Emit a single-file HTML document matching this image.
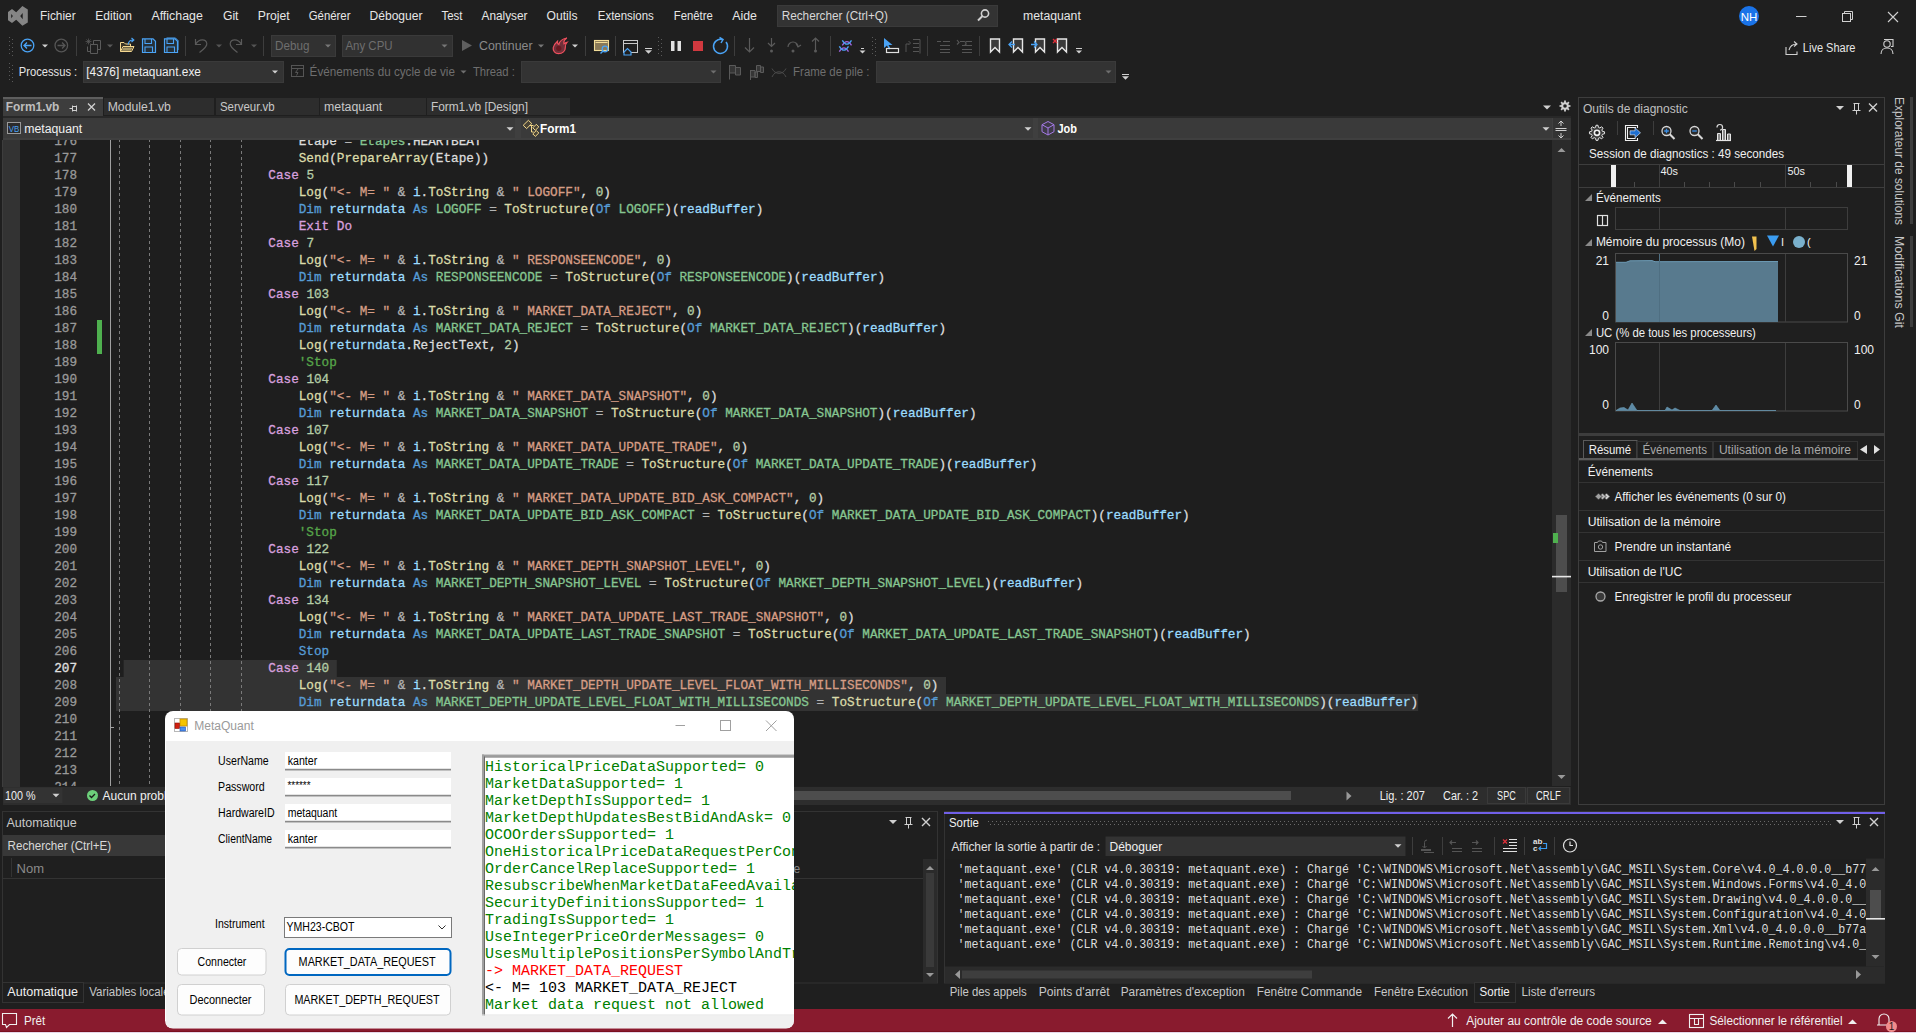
<!DOCTYPE html><html><head><meta charset="utf-8"><style>html,body{margin:0;padding:0;width:1916px;height:1033px;overflow:hidden;background:#1f1f1f}svg{display:block;font-family:"Liberation Sans",sans-serif}text{white-space:pre}</style></head><body><svg width="1916" height="1033" viewBox="0 0 1916 1033"><rect x="0" y="0" width="1916" height="1033" fill="#1f1f1f" />
<path d="M8,12 L12,9 L16.2,12.2 L22.4,6 L27.8,9.6 L27.8,22.4 L22.4,25.8 L16.2,19.8 L12,23 L8,20.2 Z M11.2,13.9 L12.9,16.1 L11.2,18.2 Z M22.7,13 L20.2,16.1 L22.7,19.2 Z" fill="#858585" fill-rule="evenodd"/>
<text x="40.1" y="20" font-size="12" fill="#e6e6e6" textLength="35.5" lengthAdjust="spacingAndGlyphs" >Fichier</text>
<text x="95.3" y="20" font-size="12" fill="#e6e6e6" textLength="36.7" lengthAdjust="spacingAndGlyphs" >Edition</text>
<text x="151.4" y="20" font-size="12" fill="#e6e6e6" textLength="51.4" lengthAdjust="spacingAndGlyphs" >Affichage</text>
<text x="222.9" y="20" font-size="12" fill="#e6e6e6" textLength="15.6" lengthAdjust="spacingAndGlyphs" >Git</text>
<text x="257.8" y="20" font-size="12" fill="#e6e6e6" textLength="31.9" lengthAdjust="spacingAndGlyphs" >Projet</text>
<text x="308.7" y="20" font-size="12" fill="#e6e6e6" textLength="41.8" lengthAdjust="spacingAndGlyphs" >Générer</text>
<text x="369.5" y="20" font-size="12" fill="#e6e6e6" textLength="53" lengthAdjust="spacingAndGlyphs" >Déboguer</text>
<text x="441.5" y="20" font-size="12" fill="#e6e6e6" textLength="21" lengthAdjust="spacingAndGlyphs" >Test</text>
<text x="481.5" y="20" font-size="12" fill="#e6e6e6" textLength="46" lengthAdjust="spacingAndGlyphs" >Analyser</text>
<text x="546.5" y="20" font-size="12" fill="#e6e6e6" textLength="31" lengthAdjust="spacingAndGlyphs" >Outils</text>
<text x="597.8" y="20" font-size="12" fill="#e6e6e6" textLength="56" lengthAdjust="spacingAndGlyphs" >Extensions</text>
<text x="673.8" y="20" font-size="12" fill="#e6e6e6" textLength="39" lengthAdjust="spacingAndGlyphs" >Fenêtre</text>
<text x="732.2" y="20" font-size="12" fill="#e6e6e6" textLength="24.7" lengthAdjust="spacingAndGlyphs" >Aide</text>
<rect x="777.5" y="5.5" width="220" height="21" fill="#333333" stroke="#3a3a3a" stroke-width="1" />
<text x="781.7" y="20" font-size="12" fill="#d8d8d8" textLength="106.2" lengthAdjust="spacingAndGlyphs" >Rechercher (Ctrl+Q)</text>
<circle cx="985" cy="13.5" r="3.6" fill="none" stroke="#d0d0d0" stroke-width="1.6" />
<line x1="982.5" y1="16" x2="978" y2="20.5" stroke="#d0d0d0" stroke-width="2" />
<text x="1023" y="20" font-size="12" fill="#e6e6e6" textLength="57.8" lengthAdjust="spacingAndGlyphs" >metaquant</text>
<circle cx="1749" cy="16" r="10" fill="#1a73e8" />
<text x="1749" y="20.5" font-size="11.5" fill="#ffffff" text-anchor="middle" >NH</text>
<line x1="1796" y1="16.5" x2="1806.5" y2="16.5" stroke="#d0d0d0" stroke-width="1" />
<rect x="1842.5" y="13.5" width="8" height="8" fill="none" stroke="#d0d0d0" stroke-width="1" />
<path d="M1844.5,13.5 V11.5 H1852.5 V19.5 H1850.5" fill="none" stroke="#d0d0d0" stroke-width="1" />
<path d="M1888,12 L1898,22 M1898,12 L1888,22" fill="none" stroke="#d0d0d0" stroke-width="1.1" />
<rect x="9" y="37" width="1" height="1" fill="#5a5a5a" />
<rect x="12" y="39" width="1" height="1" fill="#5a5a5a" />
<rect x="9" y="41" width="1" height="1" fill="#5a5a5a" />
<rect x="12" y="43" width="1" height="1" fill="#5a5a5a" />
<rect x="9" y="45" width="1" height="1" fill="#5a5a5a" />
<rect x="12" y="47" width="1" height="1" fill="#5a5a5a" />
<rect x="9" y="49" width="1" height="1" fill="#5a5a5a" />
<rect x="12" y="51" width="1" height="1" fill="#5a5a5a" />
<rect x="9" y="53" width="1" height="1" fill="#5a5a5a" />
<rect x="12" y="55" width="1" height="1" fill="#5a5a5a" />
<circle cx="27.5" cy="45.5" r="6.3" fill="none" stroke="#4aa3f5" stroke-width="1.3" />
<path d="M24,45.5 H31.5 M27,42.5 L24,45.5 L27,48.5" fill="none" stroke="#4aa3f5" stroke-width="1.3" />
<path d="M42.0,44.5 L48.0,44.5 L45,47.5 Z" fill="#d0d0d0" />
<circle cx="61.3" cy="45.5" r="6.3" fill="none" stroke="#555555" stroke-width="1.3" />
<path d="M57.5,45.5 H65 M62,42.5 L65,45.5 L62,48.5" fill="none" stroke="#555555" stroke-width="1.3" />
<line x1="76.5" y1="36" x2="76.5" y2="56" stroke="#3d3d3d" stroke-width="1" />
<path d="M93.5,44.5 V40.5 H100.5 V49.5 H97.5 M90.5,53.5 V44.5 H97.5 V53.5 Z M87.5,46.5 V51.5 H90.5" fill="none" stroke="#5a5a5a" stroke-width="1" />
<path d="M88.5,38.5 v6 M85.5,41.5 h6 M86.4,39.4 l4.2,4.2 M90.6,39.4 l-4.2,4.2" fill="none" stroke="#5a5a5a" stroke-width="0.7" />
<path d="M107.0,44.5 L113.0,44.5 L110,47.5 Z" fill="#5a5a5a" />
<path d="M120.5,51.5 V42.5 H124 L125.5,44 H130.5 V46 M120.5,51.5 L123,46.5 H134 L131.5,51.5 Z" fill="#3a3426" stroke="#f5d890" stroke-width="1" />
<path d="M121.5,50.8 L123.5,47.5 H132.8 L130.8,50.8 Z" fill="#a89868" />
<path d="M128.2,44.5 C128.5,41.5 130.5,40 133,40 M131.5,38 L133.8,40 L131.5,42" fill="none" stroke="#4aa3f5" stroke-width="1.2" />
<path d="M142.5,38.8 H153 L155.5,41.3 V52.5 H142.5 Z" fill="#263038" stroke="#4aa3f5" stroke-width="1.2" />
<path d="M145,39 V43.5 H151.5 V39 M145,52.5 V47 H152.5 V52.5" fill="none" stroke="#4aa3f5" stroke-width="1.1" />
<path d="M164.5,38.8 H175 L177.5,41.3 V52.5 H164.5 Z" fill="#263038" stroke="#4aa3f5" stroke-width="1.2" />
<path d="M167,39 V43.5 H173.5 V39 M167,52.5 V47 H174.5 V52.5" fill="none" stroke="#4aa3f5" stroke-width="1.1" />
<path d="M166.5,38 H175.5 L178,40.5 V50" fill="none" stroke="#4aa3f5" stroke-width="1" />
<line x1="185.5" y1="36" x2="185.5" y2="56" stroke="#3d3d3d" stroke-width="1" />
<path d="M195.5,39 V44.5 H201 M195.8,44 C199,38.5 206,38.5 206.8,43.5 C207.2,46 205.5,48 199.5,52.5" fill="none" stroke="#5a5a5a" stroke-width="1.2" />
<path d="M216.0,44.5 L222.0,44.5 L219,47.5 Z" fill="#555" />
<path d="M241.5,39 V44.5 H236 M241.2,44 C238,38.5 231,38.5 230.2,43.5 C229.8,46 231.5,48 237.5,52.5" fill="none" stroke="#5a5a5a" stroke-width="1.2" />
<path d="M251.0,44.5 L257.0,44.5 L254,47.5 Z" fill="#555" />
<line x1="263.5" y1="36" x2="263.5" y2="56" stroke="#3d3d3d" stroke-width="1" />
<rect x="271.5" y="35.5" width="64" height="21" fill="#313131" stroke="#3a3a3a" stroke-width="1" />
<text x="275.1" y="50" font-size="12" fill="#6e6e6e" textLength="34.4" lengthAdjust="spacingAndGlyphs" >Debug</text>
<path d="M325.0,44.5 L331.0,44.5 L328,47.5 Z" fill="#777" />
<rect x="342.5" y="35.5" width="110" height="21" fill="#313131" stroke="#3a3a3a" stroke-width="1" />
<text x="345.4" y="50" font-size="12" fill="#6e6e6e" textLength="47.2" lengthAdjust="spacingAndGlyphs" >Any CPU</text>
<path d="M441.5,44.5 L447.5,44.5 L444.5,47.5 Z" fill="#777" />
<path d="M462,40 L472,45.5 L462,51 Z" fill="#5f5f5f" />
<text x="479.0" y="50" font-size="12" fill="#8a8a8a" textLength="53.5" lengthAdjust="spacingAndGlyphs" >Continuer</text>
<path d="M538.0,44.5 L544.0,44.5 L541,47.5 Z" fill="#777" />
<path d="M558.5,53.6 C555,53.6 552.8,51 553.2,47.8 C553.6,44.8 556,42.5 557.5,41.2 C557.3,42.8 557.8,44 558.8,44.5 C559.5,41.5 562.5,38.8 566.8,38 C564.5,39.5 563.5,41.8 564,43.8 C565,43 566,42.5 567,42.3 C565.5,43.8 565.2,45.5 565.3,47.5 C565.5,51 562.5,53.6 558.5,53.6 Z" fill="#70303a" stroke="#f0505e" stroke-width="1.2" />
<circle cx="558.8" cy="48.3" r="2.6" fill="#6a1820" />
<path d="M572.0,44.5 L578.0,44.5 L575,47.5 Z" fill="#d0d0d0" />
<line x1="585.5" y1="36" x2="585.5" y2="56" stroke="#3d3d3d" stroke-width="1" />
<rect x="594.5" y="40.5" width="14" height="10" fill="#8a7a58" stroke="#f2dc98" stroke-width="1.1" />
<line x1="595.5" y1="42.5" x2="607.5" y2="42.5" stroke="#f2dc98" stroke-width="1" />
<circle cx="605" cy="49" r="2.8" fill="none" stroke="#4aa3f5" stroke-width="1.3" />
<line x1="603" y1="51" x2="600.5" y2="53.5" stroke="#4aa3f5" stroke-width="1.5" />
<line x1="615.5" y1="36" x2="615.5" y2="56" stroke="#3d3d3d" stroke-width="1" />
<rect x="623.5" y="40.5" width="14" height="12" fill="none" stroke="#c8c8c8" stroke-width="1" />
<line x1="623.5" y1="43.5" x2="637.5" y2="43.5" stroke="#c8c8c8" stroke-width="1" />
<path d="M624,52 l3.5,-3.5 l3.5,3.5 v3 h-7 Z" fill="#1f1f1f" stroke="#4aa3f5" stroke-width="1.2" />
<line x1="645" y1="48.5" x2="652" y2="48.5" stroke="#d0d0d0" stroke-width="1" />
<path d="M645.0,50.25 L652.0,50.25 L648.5,53.75 Z" fill="#d0d0d0" />
<rect x="658" y="37" width="1" height="1" fill="#5a5a5a" />
<rect x="661" y="39" width="1" height="1" fill="#5a5a5a" />
<rect x="658" y="41" width="1" height="1" fill="#5a5a5a" />
<rect x="661" y="43" width="1" height="1" fill="#5a5a5a" />
<rect x="658" y="45" width="1" height="1" fill="#5a5a5a" />
<rect x="661" y="47" width="1" height="1" fill="#5a5a5a" />
<rect x="658" y="49" width="1" height="1" fill="#5a5a5a" />
<rect x="661" y="51" width="1" height="1" fill="#5a5a5a" />
<rect x="658" y="53" width="1" height="1" fill="#5a5a5a" />
<rect x="661" y="55" width="1" height="1" fill="#5a5a5a" />
<rect x="671" y="41" width="3.5" height="10" fill="#e0e0e0" />
<rect x="677.5" y="41" width="3.5" height="10" fill="#e0e0e0" />
<rect x="693" y="41" width="10" height="10" fill="#d1393f" />
<path d="M726,42 a7,7 0 1 1 -4,-2.5" fill="none" stroke="#4aa3f5" stroke-width="1.5" />
<path d="M719.5,37.5 l3.5,2 l-2,3.5" fill="none" stroke="#4aa3f5" stroke-width="1.5" />
<line x1="734.5" y1="36" x2="734.5" y2="56" stroke="#3d3d3d" stroke-width="1" />
<path d="M749.5,38 v14 M745,47.5 l4.5,4.5 l4.5,-4.5" fill="none" stroke="#5a5a5a" stroke-width="1.2" />
<path d="M771.5,38 v8 M768,43 l3.5,3.5 l3.5,-3.5" fill="none" stroke="#5a5a5a" stroke-width="1.2" />
<circle cx="771.5" cy="51" r="1.5" fill="#5a5a5a" />
<path d="M788,47 a5,5 0 0 1 10,0 M796,43.5 l2,3.5 l3,-2" fill="none" stroke="#5a5a5a" stroke-width="1.2" />
<circle cx="793" cy="51" r="1.5" fill="#5a5a5a" />
<path d="M815.5,52 v-14 M812,41.5 l3.5,-3.5 l3.5,3.5" fill="none" stroke="#5a5a5a" stroke-width="1.2" />
<circle cx="815.5" cy="51" r="1.5" fill="#5a5a5a" />
<line x1="830.5" y1="36" x2="830.5" y2="56" stroke="#3d3d3d" stroke-width="1" />
<path d="M842.3,45.4 Q846.9,38 851.5,45.4 M839.3,51.6 Q843.9,44 848.5,51.6" fill="none" stroke="#a066e0" stroke-width="1.3" />
<path d="M842.3,40.3 Q846.9,48 851.5,40.3 M839.3,46.3 Q843.9,54 848.5,46.3" fill="none" stroke="#4aa3f5" stroke-width="1.3" />
<line x1="861" y1="48.5" x2="864" y2="48.5" stroke="#d0d0d0" stroke-width="1" />
<path d="M859.5,50.5 L865.5,50.5 L862.5,53.5 Z" fill="#d0d0d0" />
<rect x="872" y="37" width="1" height="1" fill="#5a5a5a" />
<rect x="875" y="39" width="1" height="1" fill="#5a5a5a" />
<rect x="872" y="41" width="1" height="1" fill="#5a5a5a" />
<rect x="875" y="43" width="1" height="1" fill="#5a5a5a" />
<rect x="872" y="45" width="1" height="1" fill="#5a5a5a" />
<rect x="875" y="47" width="1" height="1" fill="#5a5a5a" />
<rect x="872" y="49" width="1" height="1" fill="#5a5a5a" />
<rect x="875" y="51" width="1" height="1" fill="#5a5a5a" />
<rect x="872" y="53" width="1" height="1" fill="#5a5a5a" />
<rect x="875" y="55" width="1" height="1" fill="#5a5a5a" />
<path d="M884,38 v10 l3,-2.5 l2,4 l1.5,-1 l-2,-3.5 h4 Z" fill="#4aa3f5" />
<rect x="886.5" y="48.5" width="12" height="4" fill="none" stroke="#e0e0e0" stroke-width="1.2" />
<path d="M906,52 v-8 h3 M908.5,41 l2,2 l-2,2 M913,39.5 h7 v14 M913,43.5 h6 M913,47.5 h6 M913,51.5 h6" fill="none" stroke="#555" stroke-width="1" />
<line x1="927.5" y1="36" x2="927.5" y2="56" stroke="#3d3d3d" stroke-width="1" />
<path d="M937,41.5 h4 M943,41.5 h7 M940,45.5 h10 M940,49.5 h10 M940,52.5 h10" fill="none" stroke="#555" stroke-width="1.2" />
<path d="M957,40 l2,2.5 l-2,2 M960,41.5 h4 a2,2 0 0 1 0,4 M966,41.5 h6 M962,45.5 h10 M962,49.5 h10 M962,52.5 h10" fill="none" stroke="#555" stroke-width="1.2" />
<line x1="979.5" y1="36" x2="979.5" y2="56" stroke="#3d3d3d" stroke-width="1" />
<path d="M990.5,39 h9 v13 l-4.5,-4.5 l-4.5,4.5 Z" fill="#3a3a3a" stroke="#e6e6e6" stroke-width="1.4" />
<path d="M1013.5,39 h9 v13 l-4.5,-4.5 l-4.5,4.5 Z" fill="#3a3a3a" stroke="#e6e6e6" stroke-width="1.4" />
<path d="M1035.5,39 h9 v13 l-4.5,-4.5 l-4.5,4.5 Z" fill="#3a3a3a" stroke="#e6e6e6" stroke-width="1.4" />
<path d="M1057.5,39 h9 v13 l-4.5,-4.5 l-4.5,4.5 Z" fill="#3a3a3a" stroke="#e6e6e6" stroke-width="1.4" />
<path d="M1009,44.5 h6 M1012,41.5 l-3,3 l3,3" fill="none" stroke="#4aa3f5" stroke-width="1.3" />
<path d="M1031,44.5 h6 M1034,41.5 l3,3 l-3,3" fill="none" stroke="#4aa3f5" stroke-width="1.3" />
<path d="M1053,39 l4,4 M1057,39 l-4,4" fill="none" stroke="#e0303a" stroke-width="1.3" />
<line x1="1076" y1="48.5" x2="1082" y2="48.5" stroke="#d0d0d0" stroke-width="1" />
<path d="M1076.0,50.5 L1082.0,50.5 L1079,53.5 Z" fill="#d0d0d0" />
<path d="M1786,47 v7.5 h11 v-3 M1789,50 c1,-4 4,-6 8,-6 M1794,41.5 l3,2.5 l-3,2.5" fill="none" stroke="#d0d0d0" stroke-width="1.1" />
<text x="1802.8" y="52" font-size="12" fill="#e6e6e6" textLength="52.7" lengthAdjust="spacingAndGlyphs" >Live Share</text>
<circle cx="1887" cy="44" r="3.2" fill="none" stroke="#d0d0d0" stroke-width="1.1" />
<path d="M1881,54 c0,-4 3,-6 6,-6 c3,0 6,2 6,6 M1884,39.5 h9 v7 h-2" fill="none" stroke="#d0d0d0" stroke-width="1.1" />
<rect x="9" y="63" width="1" height="1" fill="#5a5a5a" />
<rect x="12" y="65" width="1" height="1" fill="#5a5a5a" />
<rect x="9" y="67" width="1" height="1" fill="#5a5a5a" />
<rect x="12" y="69" width="1" height="1" fill="#5a5a5a" />
<rect x="9" y="71" width="1" height="1" fill="#5a5a5a" />
<rect x="12" y="73" width="1" height="1" fill="#5a5a5a" />
<rect x="9" y="75" width="1" height="1" fill="#5a5a5a" />
<rect x="12" y="77" width="1" height="1" fill="#5a5a5a" />
<rect x="9" y="79" width="1" height="1" fill="#5a5a5a" />
<rect x="12" y="81" width="1" height="1" fill="#5a5a5a" />
<text x="18.8" y="76" font-size="12" fill="#e6e6e6" textLength="58.4" lengthAdjust="spacingAndGlyphs" >Processus :</text>
<rect x="83.5" y="61.5" width="200" height="21" fill="#333333" stroke="#3a3a3a" stroke-width="1" />
<text x="86.3" y="76" font-size="12" fill="#f0f0f0" textLength="114.6" lengthAdjust="spacingAndGlyphs" >[4376] metaquant.exe</text>
<path d="M272.0,70.5 L278.0,70.5 L275,73.5 Z" fill="#d0d0d0" />
<rect x="291.5" y="65.5" width="12" height="11" fill="none" stroke="#555" stroke-width="1" />
<line x1="291.5" y1="68.5" x2="303.5" y2="68.5" stroke="#555" stroke-width="1" />
<path d="M298,69 l-2.5,3.5 h2.5 l-1.5,3" fill="none" stroke="#555" stroke-width="1" />
<text x="309.6" y="76" font-size="12" fill="#6e6e6e" textLength="145.3" lengthAdjust="spacingAndGlyphs" >Événements du cycle de vie</text>
<path d="M460.5,70.5 L466.5,70.5 L463.5,73.5 Z" fill="#6e6e6e" />
<text x="472.9" y="76" font-size="12" fill="#6e6e6e" textLength="42" lengthAdjust="spacingAndGlyphs" >Thread :</text>
<rect x="521.5" y="61.5" width="199" height="21" fill="#333333" stroke="#3a3a3a" stroke-width="1" />
<path d="M710.5,70.5 L716.5,70.5 L713.5,73.5 Z" fill="#6e6e6e" />
<path d="M729.5,65.5 H735.5 V73 H729.5 Z M735.5,67.5 H740.5 V75 H735.5 Z" fill="#353535" stroke="#5a5a5a" stroke-width="1" />
<line x1="729.5" y1="65" x2="729.5" y2="79.5" stroke="#5a5a5a" stroke-width="1" />
<path d="M750.5,70.5 H755 V77 H750.5 Z M755,72 H757.5 V77.5 H755 Z M756.5,65.5 H760.5 V71.5 H756.5 Z M760.5,67 H763.5 V72.5 H760.5 Z" fill="#353535" stroke="#5a5a5a" stroke-width="1" />
<line x1="750.5" y1="70" x2="750.5" y2="80" stroke="#5a5a5a" stroke-width="1" />
<path d="M772,68.5 C775,75 783,75 786,68.5 M772,77 C775,70 783,70 786,77" fill="none" stroke="#4a4a4a" stroke-width="1" />
<text x="793.1" y="76" font-size="12" fill="#6e6e6e" textLength="76.4" lengthAdjust="spacingAndGlyphs" >Frame de pile :</text>
<rect x="876.5" y="61.5" width="239" height="21" fill="#333333" stroke="#3a3a3a" stroke-width="1" />
<path d="M1105.5,70.5 L1111.5,70.5 L1108.5,73.5 Z" fill="#6e6e6e" />
<line x1="1122" y1="74.5" x2="1129" y2="74.5" stroke="#d0d0d0" stroke-width="1" />
<path d="M1122.0,76.25 L1129.0,76.25 L1125.5,79.75 Z" fill="#d0d0d0" />
<rect x="3" y="97" width="100" height="19" fill="#3d3d3d" />
<rect x="3" y="97" width="100" height="2" fill="#5e5e5e" />
<text x="5.8" y="111" font-size="12" fill="#bdbdbd" font-weight="bold" textLength="53.6" lengthAdjust="spacingAndGlyphs" >Form1.vb</text>
<path d="M69.5,108.5 h3 M72.5,105.5 v6 M72.5,106.5 h4 v4 h-4 M76.5,105.5 v6" fill="none" stroke="#d0d0d0" stroke-width="1" />
<path d="M88,103.5 l7,7 M95,103.5 l-7,7" fill="none" stroke="#d0d0d0" stroke-width="1.3" />
<rect x="104" y="98" width="110" height="17" fill="#2d2d2d" />
<text x="107.7" y="111" font-size="12" fill="#c8c8c8" textLength="63.2" lengthAdjust="spacingAndGlyphs" >Module1.vb</text>
<rect x="216" y="98" width="103" height="17" fill="#2d2d2d" />
<text x="219.9" y="111" font-size="12" fill="#c8c8c8" textLength="54.8" lengthAdjust="spacingAndGlyphs" >Serveur.vb</text>
<rect x="320" y="98" width="106" height="17" fill="#2d2d2d" />
<text x="324.0" y="111" font-size="12" fill="#c8c8c8" textLength="58.3" lengthAdjust="spacingAndGlyphs" >metaquant</text>
<rect x="427" y="98" width="143" height="17" fill="#2d2d2d" />
<text x="430.9" y="111" font-size="12" fill="#c8c8c8" textLength="97.1" lengthAdjust="spacingAndGlyphs" >Form1.vb [Design]</text>
<path d="M1543.0,105.5 L1551.0,105.5 L1547,109.5 Z" fill="#d0d0d0" />
<path d="M1570.42,105.07 L1570.42,106.93 L1568.86,106.87 L1568.35,108.11 L1569.49,109.18 L1568.18,110.49 L1567.11,109.35 L1565.87,109.86 L1565.93,111.42 L1564.07,111.42 L1564.13,109.86 L1562.89,109.35 L1561.82,110.49 L1560.51,109.18 L1561.65,108.11 L1561.14,106.87 L1559.58,106.93 L1559.58,105.07 L1561.14,105.13 L1561.65,103.89 L1560.51,102.82 L1561.82,101.51 L1562.89,102.65 L1564.13,102.14 L1564.07,100.58 L1565.93,100.58 L1565.87,102.14 L1567.11,102.65 L1568.18,101.51 L1569.49,102.82 L1568.35,103.89 L1568.86,105.13 Z" fill="#d0d0d0" />
<circle cx="1565" cy="106" r="1.8" fill="#1f1f1f" />
<rect x="3" y="116" width="1568" height="24" fill="#3f3f3f" />
<rect x="3" y="116" width="1568" height="2" fill="#282828" />
<rect x="3" y="118" width="512" height="20" fill="#3a3a3a" />
<rect x="521" y="118" width="512" height="20" fill="#3a3a3a" />
<rect x="1038" y="118" width="514" height="20" fill="#3a3a3a" />
<rect x="1553" y="118" width="18" height="20" fill="#333333" />
<rect x="7.5" y="122.5" width="13" height="11" fill="#2b2b2b" stroke="#9a9a9a" stroke-width="1" />
<text x="8.8" y="131.5" font-size="8.5" fill="#4aa3f5" textLength="10.5" lengthAdjust="spacingAndGlyphs" >VB</text>
<text x="24.2" y="132.6" font-size="12" fill="#f0f0f0" textLength="58.1" lengthAdjust="spacingAndGlyphs" >metaquant</text>
<path d="M506.5,127.25 L513.5,127.25 L510,130.75 Z" fill="#d0d0d0" />
<path d="M528.4,120.3 L531.8,123.6 L526.6,128.6 L523.2,125.3 Z M536.3,124.3 L538.8,126.9 L535.3,130.3 L532.8,127.8 Z M536.3,130.5 L538.8,133 L535.3,136.4 L532.8,133.9 Z" fill="#4a4436" stroke="#f5d98a" stroke-width="1" />
<path d="M529.5,125.5 H533.5 M531.5,125.5 V132 H533.5" fill="none" stroke="#f5d98a" stroke-width="1" />
<text x="540.0" y="133" font-size="12" fill="#ffffff" font-weight="bold" textLength="36" lengthAdjust="spacingAndGlyphs" >Form1</text>
<path d="M1024.5,127.25 L1031.5,127.25 L1028,130.75 Z" fill="#d0d0d0" />
<path d="M1048,121.5 l6,3.2 v7 l-6,3.3 l-6,-3.3 v-7 Z" fill="#3e3a48" stroke="#a57ae6" stroke-width="1" />
<path d="M1042,124.7 l6,3.3 l6,-3.3 M1048,128 v7" fill="none" stroke="#a57ae6" stroke-width="1" />
<text x="1057.5" y="133" font-size="12" fill="#ffffff" font-weight="bold" textLength="19.5" lengthAdjust="spacingAndGlyphs" >Job</text>
<path d="M1542.5,127.25 L1549.5,127.25 L1546,130.75 Z" fill="#d0d0d0" />
<path d="M1555.5,128.5 h11 M1555.5,130.5 h11 M1561,121 v5 M1561,133 v5 M1558.5,123.5 l2.5,-2.5 l2.5,2.5 M1558.5,135.5 l2.5,2.5 l2.5,-2.5" fill="none" stroke="#d0d0d0" stroke-width="1" />
<rect x="3" y="140" width="1549" height="646" fill="#1e1e1e" />
<rect x="2" y="140" width="18" height="647" fill="#333333" />
<rect x="2" y="140" width="1" height="647" fill="#3d3d3d" />
<rect x="123.615" y="660" width="213.22" height="17" fill="#333333" />
<rect x="116.0" y="677" width="830.035" height="17" fill="#333333" />
<rect x="116.0" y="694" width="1302.165" height="17" fill="#333333" />
<rect x="110" y="140" width="1" height="646" fill="#a0a0a0" />
<rect x="110" y="727" width="4" height="1" fill="#a0a0a0" />
<line x1="119.5" y1="140" x2="119.5" y2="786" stroke="#7a7a7a" stroke-width="1" stroke-dasharray="3 3" stroke-dashoffset="1"/>
<line x1="149.5" y1="140" x2="149.5" y2="786" stroke="#7a7a7a" stroke-width="1" stroke-dasharray="3 3" stroke-dashoffset="1"/>
<line x1="180.5" y1="140" x2="180.5" y2="786" stroke="#7a7a7a" stroke-width="1" stroke-dasharray="3 3" stroke-dashoffset="1"/>
<line x1="210.5" y1="140" x2="210.5" y2="786" stroke="#7a7a7a" stroke-width="1" stroke-dasharray="3 3" stroke-dashoffset="1"/>
<line x1="241.5" y1="140" x2="241.5" y2="786" stroke="#7a7a7a" stroke-width="1" stroke-dasharray="3 3" stroke-dashoffset="1"/>
<rect x="97" y="320" width="5" height="34" fill="#4fb04f" />
<defs><clipPath id="edclip"><rect x="3" y="140" width="1549" height="646"/></clipPath></defs>
<g font-family="Liberation Mono" font-size="13" stroke-width="0.3" clip-path="url(#edclip)">
<text x="77" y="145" text-anchor="end" fill="#999999" stroke="#999999" textLength="22.84" lengthAdjust="spacingAndGlyphs">176</text>
<text x="298.76" y="145" fill="#DCDCDC" stroke="#DCDCDC" textLength="38.08" lengthAdjust="spacingAndGlyphs">Etape</text><text x="344.45" y="145" fill="#B4B4B4" stroke="#B4B4B4" textLength="7.62" lengthAdjust="spacingAndGlyphs">=</text><text x="359.68" y="145" fill="#86C691" stroke="#86C691" textLength="45.69" lengthAdjust="spacingAndGlyphs">Etapes</text><text x="405.37" y="145" fill="#DCDCDC" stroke="#DCDCDC" textLength="76.15" lengthAdjust="spacingAndGlyphs">.HEARTBEAT</text>
<text x="77" y="162" text-anchor="end" fill="#999999" stroke="#999999" textLength="22.84" lengthAdjust="spacingAndGlyphs">177</text>
<text x="298.76" y="162" fill="#DCDCAA" stroke="#DCDCAA" textLength="30.46" lengthAdjust="spacingAndGlyphs">Send</text><text x="329.22" y="162" fill="#DCDCDC" stroke="#DCDCDC" textLength="7.62" lengthAdjust="spacingAndGlyphs">(</text><text x="336.84" y="162" fill="#DCDCAA" stroke="#DCDCAA" textLength="91.38" lengthAdjust="spacingAndGlyphs">PrepareArray</text><text x="428.22" y="162" fill="#DCDCDC" stroke="#DCDCDC" textLength="60.92" lengthAdjust="spacingAndGlyphs">(Etape))</text>
<text x="77" y="179" text-anchor="end" fill="#999999" stroke="#999999" textLength="22.84" lengthAdjust="spacingAndGlyphs">178</text>
<text x="268.30" y="179" fill="#D8A0DF" stroke="#D8A0DF" textLength="30.46" lengthAdjust="spacingAndGlyphs">Case</text><text x="306.38" y="179" fill="#B5CEA8" stroke="#B5CEA8" textLength="7.62" lengthAdjust="spacingAndGlyphs">5</text>
<text x="77" y="196" text-anchor="end" fill="#999999" stroke="#999999" textLength="22.84" lengthAdjust="spacingAndGlyphs">179</text>
<text x="298.76" y="196" fill="#DCDCAA" stroke="#DCDCAA" textLength="22.84" lengthAdjust="spacingAndGlyphs">Log</text><text x="321.61" y="196" fill="#DCDCDC" stroke="#DCDCDC" textLength="7.62" lengthAdjust="spacingAndGlyphs">(</text><text x="329.22" y="196" fill="#D69D85" stroke="#D69D85" textLength="60.92" lengthAdjust="spacingAndGlyphs">"&lt;- M= "</text><text x="397.75" y="196" fill="#B4B4B4" stroke="#B4B4B4" textLength="7.62" lengthAdjust="spacingAndGlyphs">&amp;</text><text x="412.99" y="196" fill="#9CDCFE" stroke="#9CDCFE" textLength="7.62" lengthAdjust="spacingAndGlyphs">i</text><text x="420.60" y="196" fill="#DCDCDC" stroke="#DCDCDC" textLength="7.62" lengthAdjust="spacingAndGlyphs">.</text><text x="428.22" y="196" fill="#DCDCAA" stroke="#DCDCAA" textLength="60.92" lengthAdjust="spacingAndGlyphs">ToString</text><text x="496.75" y="196" fill="#B4B4B4" stroke="#B4B4B4" textLength="7.62" lengthAdjust="spacingAndGlyphs">&amp;</text><text x="511.98" y="196" fill="#D69D85" stroke="#D69D85" textLength="68.53" lengthAdjust="spacingAndGlyphs">" LOGOFF"</text><text x="580.51" y="196" fill="#DCDCDC" stroke="#DCDCDC" textLength="15.23" lengthAdjust="spacingAndGlyphs">, </text><text x="595.75" y="196" fill="#B5CEA8" stroke="#B5CEA8" textLength="7.62" lengthAdjust="spacingAndGlyphs">0</text><text x="603.36" y="196" fill="#DCDCDC" stroke="#DCDCDC" textLength="7.62" lengthAdjust="spacingAndGlyphs">)</text>
<text x="77" y="213" text-anchor="end" fill="#999999" stroke="#999999" textLength="22.84" lengthAdjust="spacingAndGlyphs">180</text>
<text x="298.76" y="213" fill="#569CD6" stroke="#569CD6" textLength="22.84" lengthAdjust="spacingAndGlyphs">Dim</text><text x="329.22" y="213" fill="#9CDCFE" stroke="#9CDCFE" textLength="76.15" lengthAdjust="spacingAndGlyphs">returndata</text><text x="412.99" y="213" fill="#569CD6" stroke="#569CD6" textLength="15.23" lengthAdjust="spacingAndGlyphs">As</text><text x="435.83" y="213" fill="#86C691" stroke="#86C691" textLength="45.69" lengthAdjust="spacingAndGlyphs">LOGOFF</text><text x="489.13" y="213" fill="#B4B4B4" stroke="#B4B4B4" textLength="7.62" lengthAdjust="spacingAndGlyphs">=</text><text x="504.37" y="213" fill="#DCDCAA" stroke="#DCDCAA" textLength="83.77" lengthAdjust="spacingAndGlyphs">ToStructure</text><text x="588.13" y="213" fill="#DCDCDC" stroke="#DCDCDC" textLength="7.62" lengthAdjust="spacingAndGlyphs">(</text><text x="595.75" y="213" fill="#569CD6" stroke="#569CD6" textLength="15.23" lengthAdjust="spacingAndGlyphs">Of</text><text x="618.59" y="213" fill="#86C691" stroke="#86C691" textLength="45.69" lengthAdjust="spacingAndGlyphs">LOGOFF</text><text x="664.28" y="213" fill="#DCDCDC" stroke="#DCDCDC" textLength="15.23" lengthAdjust="spacingAndGlyphs">)(</text><text x="679.51" y="213" fill="#9CDCFE" stroke="#9CDCFE" textLength="76.15" lengthAdjust="spacingAndGlyphs">readBuffer</text><text x="755.66" y="213" fill="#DCDCDC" stroke="#DCDCDC" textLength="7.62" lengthAdjust="spacingAndGlyphs">)</text>
<text x="77" y="230" text-anchor="end" fill="#999999" stroke="#999999" textLength="22.84" lengthAdjust="spacingAndGlyphs">181</text>
<text x="298.76" y="230" fill="#D8A0DF" stroke="#D8A0DF" textLength="53.30" lengthAdjust="spacingAndGlyphs">Exit Do</text>
<text x="77" y="247" text-anchor="end" fill="#999999" stroke="#999999" textLength="22.84" lengthAdjust="spacingAndGlyphs">182</text>
<text x="268.30" y="247" fill="#D8A0DF" stroke="#D8A0DF" textLength="30.46" lengthAdjust="spacingAndGlyphs">Case</text><text x="306.38" y="247" fill="#B5CEA8" stroke="#B5CEA8" textLength="7.62" lengthAdjust="spacingAndGlyphs">7</text>
<text x="77" y="264" text-anchor="end" fill="#999999" stroke="#999999" textLength="22.84" lengthAdjust="spacingAndGlyphs">183</text>
<text x="298.76" y="264" fill="#DCDCAA" stroke="#DCDCAA" textLength="22.84" lengthAdjust="spacingAndGlyphs">Log</text><text x="321.61" y="264" fill="#DCDCDC" stroke="#DCDCDC" textLength="7.62" lengthAdjust="spacingAndGlyphs">(</text><text x="329.22" y="264" fill="#D69D85" stroke="#D69D85" textLength="60.92" lengthAdjust="spacingAndGlyphs">"&lt;- M= "</text><text x="397.75" y="264" fill="#B4B4B4" stroke="#B4B4B4" textLength="7.62" lengthAdjust="spacingAndGlyphs">&amp;</text><text x="412.99" y="264" fill="#9CDCFE" stroke="#9CDCFE" textLength="7.62" lengthAdjust="spacingAndGlyphs">i</text><text x="420.60" y="264" fill="#DCDCDC" stroke="#DCDCDC" textLength="7.62" lengthAdjust="spacingAndGlyphs">.</text><text x="428.22" y="264" fill="#DCDCAA" stroke="#DCDCAA" textLength="60.92" lengthAdjust="spacingAndGlyphs">ToString</text><text x="496.75" y="264" fill="#B4B4B4" stroke="#B4B4B4" textLength="7.62" lengthAdjust="spacingAndGlyphs">&amp;</text><text x="511.98" y="264" fill="#D69D85" stroke="#D69D85" textLength="129.46" lengthAdjust="spacingAndGlyphs">" RESPONSEENCODE"</text><text x="641.44" y="264" fill="#DCDCDC" stroke="#DCDCDC" textLength="15.23" lengthAdjust="spacingAndGlyphs">, </text><text x="656.66" y="264" fill="#B5CEA8" stroke="#B5CEA8" textLength="7.62" lengthAdjust="spacingAndGlyphs">0</text><text x="664.28" y="264" fill="#DCDCDC" stroke="#DCDCDC" textLength="7.62" lengthAdjust="spacingAndGlyphs">)</text>
<text x="77" y="281" text-anchor="end" fill="#999999" stroke="#999999" textLength="22.84" lengthAdjust="spacingAndGlyphs">184</text>
<text x="298.76" y="281" fill="#569CD6" stroke="#569CD6" textLength="22.84" lengthAdjust="spacingAndGlyphs">Dim</text><text x="329.22" y="281" fill="#9CDCFE" stroke="#9CDCFE" textLength="76.15" lengthAdjust="spacingAndGlyphs">returndata</text><text x="412.99" y="281" fill="#569CD6" stroke="#569CD6" textLength="15.23" lengthAdjust="spacingAndGlyphs">As</text><text x="435.83" y="281" fill="#86C691" stroke="#86C691" textLength="106.61" lengthAdjust="spacingAndGlyphs">RESPONSEENCODE</text><text x="550.06" y="281" fill="#B4B4B4" stroke="#B4B4B4" textLength="7.62" lengthAdjust="spacingAndGlyphs">=</text><text x="565.29" y="281" fill="#DCDCAA" stroke="#DCDCAA" textLength="83.77" lengthAdjust="spacingAndGlyphs">ToStructure</text><text x="649.05" y="281" fill="#DCDCDC" stroke="#DCDCDC" textLength="7.62" lengthAdjust="spacingAndGlyphs">(</text><text x="656.66" y="281" fill="#569CD6" stroke="#569CD6" textLength="15.23" lengthAdjust="spacingAndGlyphs">Of</text><text x="679.51" y="281" fill="#86C691" stroke="#86C691" textLength="106.61" lengthAdjust="spacingAndGlyphs">RESPONSEENCODE</text><text x="786.12" y="281" fill="#DCDCDC" stroke="#DCDCDC" textLength="15.23" lengthAdjust="spacingAndGlyphs">)(</text><text x="801.35" y="281" fill="#9CDCFE" stroke="#9CDCFE" textLength="76.15" lengthAdjust="spacingAndGlyphs">readBuffer</text><text x="877.50" y="281" fill="#DCDCDC" stroke="#DCDCDC" textLength="7.62" lengthAdjust="spacingAndGlyphs">)</text>
<text x="77" y="298" text-anchor="end" fill="#999999" stroke="#999999" textLength="22.84" lengthAdjust="spacingAndGlyphs">185</text>
<text x="268.30" y="298" fill="#D8A0DF" stroke="#D8A0DF" textLength="30.46" lengthAdjust="spacingAndGlyphs">Case</text><text x="306.38" y="298" fill="#B5CEA8" stroke="#B5CEA8" textLength="22.84" lengthAdjust="spacingAndGlyphs">103</text>
<text x="77" y="315" text-anchor="end" fill="#999999" stroke="#999999" textLength="22.84" lengthAdjust="spacingAndGlyphs">186</text>
<text x="298.76" y="315" fill="#DCDCAA" stroke="#DCDCAA" textLength="22.84" lengthAdjust="spacingAndGlyphs">Log</text><text x="321.61" y="315" fill="#DCDCDC" stroke="#DCDCDC" textLength="7.62" lengthAdjust="spacingAndGlyphs">(</text><text x="329.22" y="315" fill="#D69D85" stroke="#D69D85" textLength="60.92" lengthAdjust="spacingAndGlyphs">"&lt;- M= "</text><text x="397.75" y="315" fill="#B4B4B4" stroke="#B4B4B4" textLength="7.62" lengthAdjust="spacingAndGlyphs">&amp;</text><text x="412.99" y="315" fill="#9CDCFE" stroke="#9CDCFE" textLength="7.62" lengthAdjust="spacingAndGlyphs">i</text><text x="420.60" y="315" fill="#DCDCDC" stroke="#DCDCDC" textLength="7.62" lengthAdjust="spacingAndGlyphs">.</text><text x="428.22" y="315" fill="#DCDCAA" stroke="#DCDCAA" textLength="60.92" lengthAdjust="spacingAndGlyphs">ToString</text><text x="496.75" y="315" fill="#B4B4B4" stroke="#B4B4B4" textLength="7.62" lengthAdjust="spacingAndGlyphs">&amp;</text><text x="511.98" y="315" fill="#D69D85" stroke="#D69D85" textLength="159.91" lengthAdjust="spacingAndGlyphs">" MARKET_DATA_REJECT"</text><text x="671.89" y="315" fill="#DCDCDC" stroke="#DCDCDC" textLength="15.23" lengthAdjust="spacingAndGlyphs">, </text><text x="687.12" y="315" fill="#B5CEA8" stroke="#B5CEA8" textLength="7.62" lengthAdjust="spacingAndGlyphs">0</text><text x="694.74" y="315" fill="#DCDCDC" stroke="#DCDCDC" textLength="7.62" lengthAdjust="spacingAndGlyphs">)</text>
<text x="77" y="332" text-anchor="end" fill="#999999" stroke="#999999" textLength="22.84" lengthAdjust="spacingAndGlyphs">187</text>
<text x="298.76" y="332" fill="#569CD6" stroke="#569CD6" textLength="22.84" lengthAdjust="spacingAndGlyphs">Dim</text><text x="329.22" y="332" fill="#9CDCFE" stroke="#9CDCFE" textLength="76.15" lengthAdjust="spacingAndGlyphs">returndata</text><text x="412.99" y="332" fill="#569CD6" stroke="#569CD6" textLength="15.23" lengthAdjust="spacingAndGlyphs">As</text><text x="435.83" y="332" fill="#86C691" stroke="#86C691" textLength="137.07" lengthAdjust="spacingAndGlyphs">MARKET_DATA_REJECT</text><text x="580.51" y="332" fill="#B4B4B4" stroke="#B4B4B4" textLength="7.62" lengthAdjust="spacingAndGlyphs">=</text><text x="595.75" y="332" fill="#DCDCAA" stroke="#DCDCAA" textLength="83.77" lengthAdjust="spacingAndGlyphs">ToStructure</text><text x="679.51" y="332" fill="#DCDCDC" stroke="#DCDCDC" textLength="7.62" lengthAdjust="spacingAndGlyphs">(</text><text x="687.12" y="332" fill="#569CD6" stroke="#569CD6" textLength="15.23" lengthAdjust="spacingAndGlyphs">Of</text><text x="709.97" y="332" fill="#86C691" stroke="#86C691" textLength="137.07" lengthAdjust="spacingAndGlyphs">MARKET_DATA_REJECT</text><text x="847.04" y="332" fill="#DCDCDC" stroke="#DCDCDC" textLength="15.23" lengthAdjust="spacingAndGlyphs">)(</text><text x="862.27" y="332" fill="#9CDCFE" stroke="#9CDCFE" textLength="76.15" lengthAdjust="spacingAndGlyphs">readBuffer</text><text x="938.42" y="332" fill="#DCDCDC" stroke="#DCDCDC" textLength="7.62" lengthAdjust="spacingAndGlyphs">)</text>
<text x="77" y="349" text-anchor="end" fill="#999999" stroke="#999999" textLength="22.84" lengthAdjust="spacingAndGlyphs">188</text>
<text x="298.76" y="349" fill="#DCDCAA" stroke="#DCDCAA" textLength="22.84" lengthAdjust="spacingAndGlyphs">Log</text><text x="321.61" y="349" fill="#DCDCDC" stroke="#DCDCDC" textLength="7.62" lengthAdjust="spacingAndGlyphs">(</text><text x="329.22" y="349" fill="#9CDCFE" stroke="#9CDCFE" textLength="76.15" lengthAdjust="spacingAndGlyphs">returndata</text><text x="405.37" y="349" fill="#DCDCDC" stroke="#DCDCDC" textLength="99.00" lengthAdjust="spacingAndGlyphs">.RejectText, </text><text x="504.37" y="349" fill="#B5CEA8" stroke="#B5CEA8" textLength="7.62" lengthAdjust="spacingAndGlyphs">2</text><text x="511.98" y="349" fill="#DCDCDC" stroke="#DCDCDC" textLength="7.62" lengthAdjust="spacingAndGlyphs">)</text>
<text x="77" y="366" text-anchor="end" fill="#999999" stroke="#999999" textLength="22.84" lengthAdjust="spacingAndGlyphs">189</text>
<text x="298.76" y="366" fill="#57A64A" stroke="#57A64A" textLength="38.08" lengthAdjust="spacingAndGlyphs">'Stop</text>
<text x="77" y="383" text-anchor="end" fill="#999999" stroke="#999999" textLength="22.84" lengthAdjust="spacingAndGlyphs">190</text>
<text x="268.30" y="383" fill="#D8A0DF" stroke="#D8A0DF" textLength="30.46" lengthAdjust="spacingAndGlyphs">Case</text><text x="306.38" y="383" fill="#B5CEA8" stroke="#B5CEA8" textLength="22.84" lengthAdjust="spacingAndGlyphs">104</text>
<text x="77" y="400" text-anchor="end" fill="#999999" stroke="#999999" textLength="22.84" lengthAdjust="spacingAndGlyphs">191</text>
<text x="298.76" y="400" fill="#DCDCAA" stroke="#DCDCAA" textLength="22.84" lengthAdjust="spacingAndGlyphs">Log</text><text x="321.61" y="400" fill="#DCDCDC" stroke="#DCDCDC" textLength="7.62" lengthAdjust="spacingAndGlyphs">(</text><text x="329.22" y="400" fill="#D69D85" stroke="#D69D85" textLength="60.92" lengthAdjust="spacingAndGlyphs">"&lt;- M= "</text><text x="397.75" y="400" fill="#B4B4B4" stroke="#B4B4B4" textLength="7.62" lengthAdjust="spacingAndGlyphs">&amp;</text><text x="412.99" y="400" fill="#9CDCFE" stroke="#9CDCFE" textLength="7.62" lengthAdjust="spacingAndGlyphs">i</text><text x="420.60" y="400" fill="#DCDCDC" stroke="#DCDCDC" textLength="7.62" lengthAdjust="spacingAndGlyphs">.</text><text x="428.22" y="400" fill="#DCDCAA" stroke="#DCDCAA" textLength="60.92" lengthAdjust="spacingAndGlyphs">ToString</text><text x="496.75" y="400" fill="#B4B4B4" stroke="#B4B4B4" textLength="7.62" lengthAdjust="spacingAndGlyphs">&amp;</text><text x="511.98" y="400" fill="#D69D85" stroke="#D69D85" textLength="175.15" lengthAdjust="spacingAndGlyphs">" MARKET_DATA_SNAPSHOT"</text><text x="687.12" y="400" fill="#DCDCDC" stroke="#DCDCDC" textLength="15.23" lengthAdjust="spacingAndGlyphs">, </text><text x="702.36" y="400" fill="#B5CEA8" stroke="#B5CEA8" textLength="7.62" lengthAdjust="spacingAndGlyphs">0</text><text x="709.97" y="400" fill="#DCDCDC" stroke="#DCDCDC" textLength="7.62" lengthAdjust="spacingAndGlyphs">)</text>
<text x="77" y="417" text-anchor="end" fill="#999999" stroke="#999999" textLength="22.84" lengthAdjust="spacingAndGlyphs">192</text>
<text x="298.76" y="417" fill="#569CD6" stroke="#569CD6" textLength="22.84" lengthAdjust="spacingAndGlyphs">Dim</text><text x="329.22" y="417" fill="#9CDCFE" stroke="#9CDCFE" textLength="76.15" lengthAdjust="spacingAndGlyphs">returndata</text><text x="412.99" y="417" fill="#569CD6" stroke="#569CD6" textLength="15.23" lengthAdjust="spacingAndGlyphs">As</text><text x="435.83" y="417" fill="#86C691" stroke="#86C691" textLength="152.30" lengthAdjust="spacingAndGlyphs">MARKET_DATA_SNAPSHOT</text><text x="595.75" y="417" fill="#B4B4B4" stroke="#B4B4B4" textLength="7.62" lengthAdjust="spacingAndGlyphs">=</text><text x="610.98" y="417" fill="#DCDCAA" stroke="#DCDCAA" textLength="83.77" lengthAdjust="spacingAndGlyphs">ToStructure</text><text x="694.74" y="417" fill="#DCDCDC" stroke="#DCDCDC" textLength="7.62" lengthAdjust="spacingAndGlyphs">(</text><text x="702.36" y="417" fill="#569CD6" stroke="#569CD6" textLength="15.23" lengthAdjust="spacingAndGlyphs">Of</text><text x="725.20" y="417" fill="#86C691" stroke="#86C691" textLength="152.30" lengthAdjust="spacingAndGlyphs">MARKET_DATA_SNAPSHOT</text><text x="877.50" y="417" fill="#DCDCDC" stroke="#DCDCDC" textLength="15.23" lengthAdjust="spacingAndGlyphs">)(</text><text x="892.73" y="417" fill="#9CDCFE" stroke="#9CDCFE" textLength="76.15" lengthAdjust="spacingAndGlyphs">readBuffer</text><text x="968.88" y="417" fill="#DCDCDC" stroke="#DCDCDC" textLength="7.62" lengthAdjust="spacingAndGlyphs">)</text>
<text x="77" y="434" text-anchor="end" fill="#999999" stroke="#999999" textLength="22.84" lengthAdjust="spacingAndGlyphs">193</text>
<text x="268.30" y="434" fill="#D8A0DF" stroke="#D8A0DF" textLength="30.46" lengthAdjust="spacingAndGlyphs">Case</text><text x="306.38" y="434" fill="#B5CEA8" stroke="#B5CEA8" textLength="22.84" lengthAdjust="spacingAndGlyphs">107</text>
<text x="77" y="451" text-anchor="end" fill="#999999" stroke="#999999" textLength="22.84" lengthAdjust="spacingAndGlyphs">194</text>
<text x="298.76" y="451" fill="#DCDCAA" stroke="#DCDCAA" textLength="22.84" lengthAdjust="spacingAndGlyphs">Log</text><text x="321.61" y="451" fill="#DCDCDC" stroke="#DCDCDC" textLength="7.62" lengthAdjust="spacingAndGlyphs">(</text><text x="329.22" y="451" fill="#D69D85" stroke="#D69D85" textLength="60.92" lengthAdjust="spacingAndGlyphs">"&lt;- M= "</text><text x="397.75" y="451" fill="#B4B4B4" stroke="#B4B4B4" textLength="7.62" lengthAdjust="spacingAndGlyphs">&amp;</text><text x="412.99" y="451" fill="#9CDCFE" stroke="#9CDCFE" textLength="7.62" lengthAdjust="spacingAndGlyphs">i</text><text x="420.60" y="451" fill="#DCDCDC" stroke="#DCDCDC" textLength="7.62" lengthAdjust="spacingAndGlyphs">.</text><text x="428.22" y="451" fill="#DCDCAA" stroke="#DCDCAA" textLength="60.92" lengthAdjust="spacingAndGlyphs">ToString</text><text x="496.75" y="451" fill="#B4B4B4" stroke="#B4B4B4" textLength="7.62" lengthAdjust="spacingAndGlyphs">&amp;</text><text x="511.98" y="451" fill="#D69D85" stroke="#D69D85" textLength="205.61" lengthAdjust="spacingAndGlyphs">" MARKET_DATA_UPDATE_TRADE"</text><text x="717.59" y="451" fill="#DCDCDC" stroke="#DCDCDC" textLength="15.23" lengthAdjust="spacingAndGlyphs">, </text><text x="732.82" y="451" fill="#B5CEA8" stroke="#B5CEA8" textLength="7.62" lengthAdjust="spacingAndGlyphs">0</text><text x="740.43" y="451" fill="#DCDCDC" stroke="#DCDCDC" textLength="7.62" lengthAdjust="spacingAndGlyphs">)</text>
<text x="77" y="468" text-anchor="end" fill="#999999" stroke="#999999" textLength="22.84" lengthAdjust="spacingAndGlyphs">195</text>
<text x="298.76" y="468" fill="#569CD6" stroke="#569CD6" textLength="22.84" lengthAdjust="spacingAndGlyphs">Dim</text><text x="329.22" y="468" fill="#9CDCFE" stroke="#9CDCFE" textLength="76.15" lengthAdjust="spacingAndGlyphs">returndata</text><text x="412.99" y="468" fill="#569CD6" stroke="#569CD6" textLength="15.23" lengthAdjust="spacingAndGlyphs">As</text><text x="435.83" y="468" fill="#86C691" stroke="#86C691" textLength="182.76" lengthAdjust="spacingAndGlyphs">MARKET_DATA_UPDATE_TRADE</text><text x="626.21" y="468" fill="#B4B4B4" stroke="#B4B4B4" textLength="7.62" lengthAdjust="spacingAndGlyphs">=</text><text x="641.44" y="468" fill="#DCDCAA" stroke="#DCDCAA" textLength="83.77" lengthAdjust="spacingAndGlyphs">ToStructure</text><text x="725.20" y="468" fill="#DCDCDC" stroke="#DCDCDC" textLength="7.62" lengthAdjust="spacingAndGlyphs">(</text><text x="732.82" y="468" fill="#569CD6" stroke="#569CD6" textLength="15.23" lengthAdjust="spacingAndGlyphs">Of</text><text x="755.66" y="468" fill="#86C691" stroke="#86C691" textLength="182.76" lengthAdjust="spacingAndGlyphs">MARKET_DATA_UPDATE_TRADE</text><text x="938.42" y="468" fill="#DCDCDC" stroke="#DCDCDC" textLength="15.23" lengthAdjust="spacingAndGlyphs">)(</text><text x="953.65" y="468" fill="#9CDCFE" stroke="#9CDCFE" textLength="76.15" lengthAdjust="spacingAndGlyphs">readBuffer</text><text x="1029.80" y="468" fill="#DCDCDC" stroke="#DCDCDC" textLength="7.62" lengthAdjust="spacingAndGlyphs">)</text>
<text x="77" y="485" text-anchor="end" fill="#999999" stroke="#999999" textLength="22.84" lengthAdjust="spacingAndGlyphs">196</text>
<text x="268.30" y="485" fill="#D8A0DF" stroke="#D8A0DF" textLength="30.46" lengthAdjust="spacingAndGlyphs">Case</text><text x="306.38" y="485" fill="#B5CEA8" stroke="#B5CEA8" textLength="22.84" lengthAdjust="spacingAndGlyphs">117</text>
<text x="77" y="502" text-anchor="end" fill="#999999" stroke="#999999" textLength="22.84" lengthAdjust="spacingAndGlyphs">197</text>
<text x="298.76" y="502" fill="#DCDCAA" stroke="#DCDCAA" textLength="22.84" lengthAdjust="spacingAndGlyphs">Log</text><text x="321.61" y="502" fill="#DCDCDC" stroke="#DCDCDC" textLength="7.62" lengthAdjust="spacingAndGlyphs">(</text><text x="329.22" y="502" fill="#D69D85" stroke="#D69D85" textLength="60.92" lengthAdjust="spacingAndGlyphs">"&lt;- M= "</text><text x="397.75" y="502" fill="#B4B4B4" stroke="#B4B4B4" textLength="7.62" lengthAdjust="spacingAndGlyphs">&amp;</text><text x="412.99" y="502" fill="#9CDCFE" stroke="#9CDCFE" textLength="7.62" lengthAdjust="spacingAndGlyphs">i</text><text x="420.60" y="502" fill="#DCDCDC" stroke="#DCDCDC" textLength="7.62" lengthAdjust="spacingAndGlyphs">.</text><text x="428.22" y="502" fill="#DCDCAA" stroke="#DCDCAA" textLength="60.92" lengthAdjust="spacingAndGlyphs">ToString</text><text x="496.75" y="502" fill="#B4B4B4" stroke="#B4B4B4" textLength="7.62" lengthAdjust="spacingAndGlyphs">&amp;</text><text x="511.98" y="502" fill="#D69D85" stroke="#D69D85" textLength="281.75" lengthAdjust="spacingAndGlyphs">" MARKET_DATA_UPDATE_BID_ASK_COMPACT"</text><text x="793.74" y="502" fill="#DCDCDC" stroke="#DCDCDC" textLength="15.23" lengthAdjust="spacingAndGlyphs">, </text><text x="808.97" y="502" fill="#B5CEA8" stroke="#B5CEA8" textLength="7.62" lengthAdjust="spacingAndGlyphs">0</text><text x="816.58" y="502" fill="#DCDCDC" stroke="#DCDCDC" textLength="7.62" lengthAdjust="spacingAndGlyphs">)</text>
<text x="77" y="519" text-anchor="end" fill="#999999" stroke="#999999" textLength="22.84" lengthAdjust="spacingAndGlyphs">198</text>
<text x="298.76" y="519" fill="#569CD6" stroke="#569CD6" textLength="22.84" lengthAdjust="spacingAndGlyphs">Dim</text><text x="329.22" y="519" fill="#9CDCFE" stroke="#9CDCFE" textLength="76.15" lengthAdjust="spacingAndGlyphs">returndata</text><text x="412.99" y="519" fill="#569CD6" stroke="#569CD6" textLength="15.23" lengthAdjust="spacingAndGlyphs">As</text><text x="435.83" y="519" fill="#86C691" stroke="#86C691" textLength="258.91" lengthAdjust="spacingAndGlyphs">MARKET_DATA_UPDATE_BID_ASK_COMPACT</text><text x="702.36" y="519" fill="#B4B4B4" stroke="#B4B4B4" textLength="7.62" lengthAdjust="spacingAndGlyphs">=</text><text x="717.59" y="519" fill="#DCDCAA" stroke="#DCDCAA" textLength="83.77" lengthAdjust="spacingAndGlyphs">ToStructure</text><text x="801.35" y="519" fill="#DCDCDC" stroke="#DCDCDC" textLength="7.62" lengthAdjust="spacingAndGlyphs">(</text><text x="808.97" y="519" fill="#569CD6" stroke="#569CD6" textLength="15.23" lengthAdjust="spacingAndGlyphs">Of</text><text x="831.81" y="519" fill="#86C691" stroke="#86C691" textLength="258.91" lengthAdjust="spacingAndGlyphs">MARKET_DATA_UPDATE_BID_ASK_COMPACT</text><text x="1090.72" y="519" fill="#DCDCDC" stroke="#DCDCDC" textLength="15.23" lengthAdjust="spacingAndGlyphs">)(</text><text x="1105.95" y="519" fill="#9CDCFE" stroke="#9CDCFE" textLength="76.15" lengthAdjust="spacingAndGlyphs">readBuffer</text><text x="1182.10" y="519" fill="#DCDCDC" stroke="#DCDCDC" textLength="7.62" lengthAdjust="spacingAndGlyphs">)</text>
<text x="77" y="536" text-anchor="end" fill="#999999" stroke="#999999" textLength="22.84" lengthAdjust="spacingAndGlyphs">199</text>
<text x="298.76" y="536" fill="#57A64A" stroke="#57A64A" textLength="38.08" lengthAdjust="spacingAndGlyphs">'Stop</text>
<text x="77" y="553" text-anchor="end" fill="#999999" stroke="#999999" textLength="22.84" lengthAdjust="spacingAndGlyphs">200</text>
<text x="268.30" y="553" fill="#D8A0DF" stroke="#D8A0DF" textLength="30.46" lengthAdjust="spacingAndGlyphs">Case</text><text x="306.38" y="553" fill="#B5CEA8" stroke="#B5CEA8" textLength="22.84" lengthAdjust="spacingAndGlyphs">122</text>
<text x="77" y="570" text-anchor="end" fill="#999999" stroke="#999999" textLength="22.84" lengthAdjust="spacingAndGlyphs">201</text>
<text x="298.76" y="570" fill="#DCDCAA" stroke="#DCDCAA" textLength="22.84" lengthAdjust="spacingAndGlyphs">Log</text><text x="321.61" y="570" fill="#DCDCDC" stroke="#DCDCDC" textLength="7.62" lengthAdjust="spacingAndGlyphs">(</text><text x="329.22" y="570" fill="#D69D85" stroke="#D69D85" textLength="60.92" lengthAdjust="spacingAndGlyphs">"&lt;- M= "</text><text x="397.75" y="570" fill="#B4B4B4" stroke="#B4B4B4" textLength="7.62" lengthAdjust="spacingAndGlyphs">&amp;</text><text x="412.99" y="570" fill="#9CDCFE" stroke="#9CDCFE" textLength="7.62" lengthAdjust="spacingAndGlyphs">i</text><text x="420.60" y="570" fill="#DCDCDC" stroke="#DCDCDC" textLength="7.62" lengthAdjust="spacingAndGlyphs">.</text><text x="428.22" y="570" fill="#DCDCAA" stroke="#DCDCAA" textLength="60.92" lengthAdjust="spacingAndGlyphs">ToString</text><text x="496.75" y="570" fill="#B4B4B4" stroke="#B4B4B4" textLength="7.62" lengthAdjust="spacingAndGlyphs">&amp;</text><text x="511.98" y="570" fill="#D69D85" stroke="#D69D85" textLength="228.45" lengthAdjust="spacingAndGlyphs">" MARKET_DEPTH_SNAPSHOT_LEVEL"</text><text x="740.43" y="570" fill="#DCDCDC" stroke="#DCDCDC" textLength="15.23" lengthAdjust="spacingAndGlyphs">, </text><text x="755.66" y="570" fill="#B5CEA8" stroke="#B5CEA8" textLength="7.62" lengthAdjust="spacingAndGlyphs">0</text><text x="763.27" y="570" fill="#DCDCDC" stroke="#DCDCDC" textLength="7.62" lengthAdjust="spacingAndGlyphs">)</text>
<text x="77" y="587" text-anchor="end" fill="#999999" stroke="#999999" textLength="22.84" lengthAdjust="spacingAndGlyphs">202</text>
<text x="298.76" y="587" fill="#569CD6" stroke="#569CD6" textLength="22.84" lengthAdjust="spacingAndGlyphs">Dim</text><text x="329.22" y="587" fill="#9CDCFE" stroke="#9CDCFE" textLength="76.15" lengthAdjust="spacingAndGlyphs">returndata</text><text x="412.99" y="587" fill="#569CD6" stroke="#569CD6" textLength="15.23" lengthAdjust="spacingAndGlyphs">As</text><text x="435.83" y="587" fill="#86C691" stroke="#86C691" textLength="205.61" lengthAdjust="spacingAndGlyphs">MARKET_DEPTH_SNAPSHOT_LEVEL</text><text x="649.05" y="587" fill="#B4B4B4" stroke="#B4B4B4" textLength="7.62" lengthAdjust="spacingAndGlyphs">=</text><text x="664.28" y="587" fill="#DCDCAA" stroke="#DCDCAA" textLength="83.77" lengthAdjust="spacingAndGlyphs">ToStructure</text><text x="748.05" y="587" fill="#DCDCDC" stroke="#DCDCDC" textLength="7.62" lengthAdjust="spacingAndGlyphs">(</text><text x="755.66" y="587" fill="#569CD6" stroke="#569CD6" textLength="15.23" lengthAdjust="spacingAndGlyphs">Of</text><text x="778.50" y="587" fill="#86C691" stroke="#86C691" textLength="205.61" lengthAdjust="spacingAndGlyphs">MARKET_DEPTH_SNAPSHOT_LEVEL</text><text x="984.11" y="587" fill="#DCDCDC" stroke="#DCDCDC" textLength="15.23" lengthAdjust="spacingAndGlyphs">)(</text><text x="999.34" y="587" fill="#9CDCFE" stroke="#9CDCFE" textLength="76.15" lengthAdjust="spacingAndGlyphs">readBuffer</text><text x="1075.49" y="587" fill="#DCDCDC" stroke="#DCDCDC" textLength="7.62" lengthAdjust="spacingAndGlyphs">)</text>
<text x="77" y="604" text-anchor="end" fill="#999999" stroke="#999999" textLength="22.84" lengthAdjust="spacingAndGlyphs">203</text>
<text x="268.30" y="604" fill="#D8A0DF" stroke="#D8A0DF" textLength="30.46" lengthAdjust="spacingAndGlyphs">Case</text><text x="306.38" y="604" fill="#B5CEA8" stroke="#B5CEA8" textLength="22.84" lengthAdjust="spacingAndGlyphs">134</text>
<text x="77" y="621" text-anchor="end" fill="#999999" stroke="#999999" textLength="22.84" lengthAdjust="spacingAndGlyphs">204</text>
<text x="298.76" y="621" fill="#DCDCAA" stroke="#DCDCAA" textLength="22.84" lengthAdjust="spacingAndGlyphs">Log</text><text x="321.61" y="621" fill="#DCDCDC" stroke="#DCDCDC" textLength="7.62" lengthAdjust="spacingAndGlyphs">(</text><text x="329.22" y="621" fill="#D69D85" stroke="#D69D85" textLength="60.92" lengthAdjust="spacingAndGlyphs">"&lt;- M= "</text><text x="397.75" y="621" fill="#B4B4B4" stroke="#B4B4B4" textLength="7.62" lengthAdjust="spacingAndGlyphs">&amp;</text><text x="412.99" y="621" fill="#9CDCFE" stroke="#9CDCFE" textLength="7.62" lengthAdjust="spacingAndGlyphs">i</text><text x="420.60" y="621" fill="#DCDCDC" stroke="#DCDCDC" textLength="7.62" lengthAdjust="spacingAndGlyphs">.</text><text x="428.22" y="621" fill="#DCDCAA" stroke="#DCDCAA" textLength="60.92" lengthAdjust="spacingAndGlyphs">ToString</text><text x="496.75" y="621" fill="#B4B4B4" stroke="#B4B4B4" textLength="7.62" lengthAdjust="spacingAndGlyphs">&amp;</text><text x="511.98" y="621" fill="#D69D85" stroke="#D69D85" textLength="312.22" lengthAdjust="spacingAndGlyphs">" MARKET_DATA_UPDATE_LAST_TRADE_SNAPSHOT"</text><text x="824.20" y="621" fill="#DCDCDC" stroke="#DCDCDC" textLength="15.23" lengthAdjust="spacingAndGlyphs">, </text><text x="839.43" y="621" fill="#B5CEA8" stroke="#B5CEA8" textLength="7.62" lengthAdjust="spacingAndGlyphs">0</text><text x="847.04" y="621" fill="#DCDCDC" stroke="#DCDCDC" textLength="7.62" lengthAdjust="spacingAndGlyphs">)</text>
<text x="77" y="638" text-anchor="end" fill="#999999" stroke="#999999" textLength="22.84" lengthAdjust="spacingAndGlyphs">205</text>
<text x="298.76" y="638" fill="#569CD6" stroke="#569CD6" textLength="22.84" lengthAdjust="spacingAndGlyphs">Dim</text><text x="329.22" y="638" fill="#9CDCFE" stroke="#9CDCFE" textLength="76.15" lengthAdjust="spacingAndGlyphs">returndata</text><text x="412.99" y="638" fill="#569CD6" stroke="#569CD6" textLength="15.23" lengthAdjust="spacingAndGlyphs">As</text><text x="435.83" y="638" fill="#86C691" stroke="#86C691" textLength="289.37" lengthAdjust="spacingAndGlyphs">MARKET_DATA_UPDATE_LAST_TRADE_SNAPSHOT</text><text x="732.82" y="638" fill="#B4B4B4" stroke="#B4B4B4" textLength="7.62" lengthAdjust="spacingAndGlyphs">=</text><text x="748.05" y="638" fill="#DCDCAA" stroke="#DCDCAA" textLength="83.77" lengthAdjust="spacingAndGlyphs">ToStructure</text><text x="831.81" y="638" fill="#DCDCDC" stroke="#DCDCDC" textLength="7.62" lengthAdjust="spacingAndGlyphs">(</text><text x="839.43" y="638" fill="#569CD6" stroke="#569CD6" textLength="15.23" lengthAdjust="spacingAndGlyphs">Of</text><text x="862.27" y="638" fill="#86C691" stroke="#86C691" textLength="289.37" lengthAdjust="spacingAndGlyphs">MARKET_DATA_UPDATE_LAST_TRADE_SNAPSHOT</text><text x="1151.64" y="638" fill="#DCDCDC" stroke="#DCDCDC" textLength="15.23" lengthAdjust="spacingAndGlyphs">)(</text><text x="1166.87" y="638" fill="#9CDCFE" stroke="#9CDCFE" textLength="76.15" lengthAdjust="spacingAndGlyphs">readBuffer</text><text x="1243.02" y="638" fill="#DCDCDC" stroke="#DCDCDC" textLength="7.62" lengthAdjust="spacingAndGlyphs">)</text>
<text x="77" y="655" text-anchor="end" fill="#999999" stroke="#999999" textLength="22.84" lengthAdjust="spacingAndGlyphs">206</text>
<text x="298.76" y="655" fill="#569CD6" stroke="#569CD6" textLength="30.46" lengthAdjust="spacingAndGlyphs">Stop</text>
<text x="77" y="672" text-anchor="end" fill="#e0e0e0" stroke="#e0e0e0" textLength="22.84" lengthAdjust="spacingAndGlyphs">207</text>
<text x="268.30" y="672" fill="#D8A0DF" stroke="#D8A0DF" textLength="30.46" lengthAdjust="spacingAndGlyphs">Case</text><text x="306.38" y="672" fill="#B5CEA8" stroke="#B5CEA8" textLength="22.84" lengthAdjust="spacingAndGlyphs">140</text>
<text x="77" y="689" text-anchor="end" fill="#999999" stroke="#999999" textLength="22.84" lengthAdjust="spacingAndGlyphs">208</text>
<text x="298.76" y="689" fill="#DCDCAA" stroke="#DCDCAA" textLength="22.84" lengthAdjust="spacingAndGlyphs">Log</text><text x="321.61" y="689" fill="#DCDCDC" stroke="#DCDCDC" textLength="7.62" lengthAdjust="spacingAndGlyphs">(</text><text x="329.22" y="689" fill="#D69D85" stroke="#D69D85" textLength="60.92" lengthAdjust="spacingAndGlyphs">"&lt;- M= "</text><text x="397.75" y="689" fill="#B4B4B4" stroke="#B4B4B4" textLength="7.62" lengthAdjust="spacingAndGlyphs">&amp;</text><text x="412.99" y="689" fill="#9CDCFE" stroke="#9CDCFE" textLength="7.62" lengthAdjust="spacingAndGlyphs">i</text><text x="420.60" y="689" fill="#DCDCDC" stroke="#DCDCDC" textLength="7.62" lengthAdjust="spacingAndGlyphs">.</text><text x="428.22" y="689" fill="#DCDCAA" stroke="#DCDCAA" textLength="60.92" lengthAdjust="spacingAndGlyphs">ToString</text><text x="496.75" y="689" fill="#B4B4B4" stroke="#B4B4B4" textLength="7.62" lengthAdjust="spacingAndGlyphs">&amp;</text><text x="511.98" y="689" fill="#D69D85" stroke="#D69D85" textLength="395.98" lengthAdjust="spacingAndGlyphs">" MARKET_DEPTH_UPDATE_LEVEL_FLOAT_WITH_MILLISECONDS"</text><text x="907.96" y="689" fill="#DCDCDC" stroke="#DCDCDC" textLength="15.23" lengthAdjust="spacingAndGlyphs">, </text><text x="923.19" y="689" fill="#B5CEA8" stroke="#B5CEA8" textLength="7.62" lengthAdjust="spacingAndGlyphs">0</text><text x="930.81" y="689" fill="#DCDCDC" stroke="#DCDCDC" textLength="7.62" lengthAdjust="spacingAndGlyphs">)</text>
<text x="77" y="706" text-anchor="end" fill="#999999" stroke="#999999" textLength="22.84" lengthAdjust="spacingAndGlyphs">209</text>
<text x="298.76" y="706" fill="#569CD6" stroke="#569CD6" textLength="22.84" lengthAdjust="spacingAndGlyphs">Dim</text><text x="329.22" y="706" fill="#9CDCFE" stroke="#9CDCFE" textLength="76.15" lengthAdjust="spacingAndGlyphs">returndata</text><text x="412.99" y="706" fill="#569CD6" stroke="#569CD6" textLength="15.23" lengthAdjust="spacingAndGlyphs">As</text><text x="435.83" y="706" fill="#86C691" stroke="#86C691" textLength="373.13" lengthAdjust="spacingAndGlyphs">MARKET_DEPTH_UPDATE_LEVEL_FLOAT_WITH_MILLISECONDS</text><text x="816.58" y="706" fill="#B4B4B4" stroke="#B4B4B4" textLength="7.62" lengthAdjust="spacingAndGlyphs">=</text><text x="831.81" y="706" fill="#DCDCAA" stroke="#DCDCAA" textLength="83.77" lengthAdjust="spacingAndGlyphs">ToStructure</text><text x="915.58" y="706" fill="#DCDCDC" stroke="#DCDCDC" textLength="7.62" lengthAdjust="spacingAndGlyphs">(</text><text x="923.19" y="706" fill="#569CD6" stroke="#569CD6" textLength="15.23" lengthAdjust="spacingAndGlyphs">Of</text><text x="946.03" y="706" fill="#86C691" stroke="#86C691" textLength="373.13" lengthAdjust="spacingAndGlyphs">MARKET_DEPTH_UPDATE_LEVEL_FLOAT_WITH_MILLISECONDS</text><text x="1319.17" y="706" fill="#DCDCDC" stroke="#DCDCDC" textLength="15.23" lengthAdjust="spacingAndGlyphs">)(</text><text x="1334.40" y="706" fill="#9CDCFE" stroke="#9CDCFE" textLength="76.15" lengthAdjust="spacingAndGlyphs">readBuffer</text><text x="1410.55" y="706" fill="#DCDCDC" stroke="#DCDCDC" textLength="7.62" lengthAdjust="spacingAndGlyphs">)</text>
<text x="77" y="723" text-anchor="end" fill="#999999" stroke="#999999" textLength="22.84" lengthAdjust="spacingAndGlyphs">210</text>
<text x="77" y="740" text-anchor="end" fill="#999999" stroke="#999999" textLength="22.84" lengthAdjust="spacingAndGlyphs">211</text>
<text x="77" y="757" text-anchor="end" fill="#999999" stroke="#999999" textLength="22.84" lengthAdjust="spacingAndGlyphs">212</text>
<text x="77" y="774" text-anchor="end" fill="#999999" stroke="#999999" textLength="22.84" lengthAdjust="spacingAndGlyphs">213</text>
<text x="77" y="791" text-anchor="end" fill="#999999" stroke="#999999" textLength="22.84" lengthAdjust="spacingAndGlyphs">214</text>
</g>
<rect x="1552" y="140" width="19" height="646" fill="#2b2b2b" />
<path d="M1557.5,152 l4,-4 l4,4 Z" fill="#999" />
<path d="M1557.5,775 l4,4 l4,-4 Z" fill="#999" />
<rect x="1556" y="515" width="11" height="77" fill="#4d4d4d" />
<rect x="1553" y="533" width="5" height="10" fill="#4fb04f" />
<rect x="1552" y="575.8" width="19" height="1.6" fill="#e8e8e8" />
<rect x="3" y="787" width="1568" height="18" fill="#2d2d2d" />
<rect x="3.5" y="787.5" width="59" height="15.5" fill="#333333" />
<text x="5.0" y="800" font-size="12" fill="#f0f0f0" textLength="30.5" lengthAdjust="spacingAndGlyphs" >100 %</text>
<path d="M52.5,793.75 L59.5,793.75 L56,797.25 Z" fill="#d0d0d0" />
<circle cx="92.5" cy="795.5" r="5.5" fill="#6ccf7a" />
<path d="M89.5,795.5 l2,2 l3.5,-3.5" fill="none" stroke="#1a1a1a" stroke-width="1.3" />
<text x="102.6" y="800" font-size="12" fill="#f0f0f0" >Aucun problème</text>
<rect x="700" y="791" width="591" height="9" fill="#4d4d4d" />
<path d="M1346.5,791.5 v9 l5,-4.5 Z" fill="#999" />
<text x="1379.7" y="800" font-size="12" fill="#f0f0f0" textLength="45.2" lengthAdjust="spacingAndGlyphs" >Lig. : 207</text>
<text x="1443.1" y="800" font-size="12" fill="#f0f0f0" textLength="35" lengthAdjust="spacingAndGlyphs" >Car. : 2</text>
<rect x="1487.5" y="787.5" width="38" height="16" fill="#2d2d2d" stroke="#3a3a3a" stroke-width="1" />
<text x="1497.1" y="800" font-size="12" fill="#f0f0f0" textLength="18.6" lengthAdjust="spacingAndGlyphs" >SPC</text>
<rect x="1527.5" y="787.5" width="42" height="16" fill="#2d2d2d" stroke="#3a3a3a" stroke-width="1" />
<text x="1536.0" y="800" font-size="12" fill="#f0f0f0" textLength="24.8" lengthAdjust="spacingAndGlyphs" >CRLF</text>
<rect x="1578.5" y="97.5" width="306" height="707" fill="#1f1f1f" stroke="#3d3d3d" stroke-width="1" />
<text x="1583.0" y="113" font-size="12" fill="#c0c0c0" textLength="104.7" lengthAdjust="spacingAndGlyphs" >Outils de diagnostic</text>
<path d="M1836.0,106.0 L1844.0,106.0 L1840,110.0 Z" fill="#d0d0d0" />
<path d="M1853.5,103.5 h6 M1854.5,103.5 v7 M1858.5,103.5 v7 M1852.5,110.5 h8 M1856.5,110.5 v4" fill="none" stroke="#d0d0d0" stroke-width="1" />
<path d="M1869,103.5 l8,8 M1877,103.5 l-8,8" fill="none" stroke="#d0d0d0" stroke-width="1.4" />
<path d="M1596.01,125.26 L1597.99,125.26 L1598.45,127.39 L1599.80,127.95 L1601.63,126.77 L1603.03,128.17 L1601.85,130.00 L1602.41,131.35 L1604.54,131.81 L1604.54,133.79 L1602.41,134.25 L1601.85,135.60 L1603.03,137.43 L1601.63,138.83 L1599.80,137.65 L1598.45,138.21 L1597.99,140.34 L1596.01,140.34 L1595.55,138.21 L1594.20,137.65 L1592.37,138.83 L1590.97,137.43 L1592.15,135.60 L1591.59,134.25 L1589.46,133.79 L1589.46,131.81 L1591.59,131.35 L1592.15,130.00 L1590.97,128.17 L1592.37,126.77 L1594.20,127.95 L1595.55,127.39 Z" fill="#3c3c3c" stroke="#e6e6e6" stroke-width="1" />
<circle cx="1597" cy="132.8" r="2.6" fill="#1f1f1f" stroke="#f0f0f0" stroke-width="1.6" />
<line x1="1617.5" y1="121" x2="1617.5" y2="135" stroke="#3d3d3d" stroke-width="1" />
<path d="M1637.5,128 V125.5 H1625.5 V140.5 H1637.5 V138 M1635.5,128 V127.5 H1627.5 V138.5 H1635.5" fill="none" stroke="#f0f0f0" stroke-width="1.1" />
<path d="M1630,130.8 H1635 V127.8 L1640.5,132.8 L1635,137.8 V134.8 H1630 Z" fill="#1f6fd0" stroke="#e8f0ff" stroke-width="0.6" />
<line x1="1653.5" y1="121" x2="1653.5" y2="135" stroke="#3d3d3d" stroke-width="1" />
<circle cx="1666.5" cy="131" r="4.5" fill="#2b2b2b" stroke="#d8d8d8" stroke-width="1.3" />
<line x1="1669.8" y1="134.3" x2="1674.5" y2="139" stroke="#d8d8d8" stroke-width="2" />
<path d="M1664.2,131 h4.6 M1666.5,128.7 v4.6" fill="none" stroke="#3a8ee6" stroke-width="1.3" />
<circle cx="1694.5" cy="131" r="4.5" fill="#2b2b2b" stroke="#d8d8d8" stroke-width="1.3" />
<line x1="1697.8" y1="134.3" x2="1702.5" y2="139" stroke="#d8d8d8" stroke-width="2" />
<path d="M1692.2,131 h4.6" fill="none" stroke="#3a8ee6" stroke-width="1.3" />
<path d="M1717.5,140.5 V133.5 H1720.5 V140.5 Z M1722.5,140.5 V129.5 H1725.5 V140.5 Z M1727.5,140.5 V134 H1730.5 V140.5 Z" fill="#8a8a8a" stroke="#e6e6e6" stroke-width="1" />
<line x1="1716" y1="140.5" x2="1731" y2="140.5" stroke="#e6e6e6" stroke-width="1.2" />
<path d="M1717,127.5 a2.8,2.8 0 1 1 3,2.6" fill="none" stroke="#d8d8d8" stroke-width="1.2" />
<text x="1589.1" y="157.5" font-size="12" fill="#f0f0f0" textLength="195" lengthAdjust="spacingAndGlyphs" >Session de diagnostics : 49 secondes</text>
<rect x="1579" y="164" width="305" height="1" fill="#3d3d3d" />
<rect x="1579" y="187" width="305" height="1" fill="#3d3d3d" />
<rect x="1611" y="165" width="5" height="22" fill="#f0f0f0" />
<rect x="1847" y="165" width="5" height="22" fill="#f0f0f0" />
<line x1="1659.5" y1="165" x2="1659.5" y2="187" stroke="#3d3d3d" stroke-width="1" />
<line x1="1785.5" y1="165" x2="1785.5" y2="187" stroke="#3d3d3d" stroke-width="1" />
<line x1="1634.5" y1="182" x2="1634.5" y2="187" stroke="#4a4a4a" stroke-width="1" />
<line x1="1684.5" y1="182" x2="1684.5" y2="187" stroke="#4a4a4a" stroke-width="1" />
<line x1="1709.5" y1="182" x2="1709.5" y2="187" stroke="#4a4a4a" stroke-width="1" />
<line x1="1734.5" y1="182" x2="1734.5" y2="187" stroke="#4a4a4a" stroke-width="1" />
<line x1="1760.5" y1="182" x2="1760.5" y2="187" stroke="#4a4a4a" stroke-width="1" />
<line x1="1810.5" y1="182" x2="1810.5" y2="187" stroke="#4a4a4a" stroke-width="1" />
<line x1="1836.5" y1="182" x2="1836.5" y2="187" stroke="#4a4a4a" stroke-width="1" />
<text x="1660.5" y="174.5" font-size="11.5" fill="#f0f0f0" textLength="17.5" lengthAdjust="spacingAndGlyphs" >40s</text>
<text x="1787.5" y="174.5" font-size="11.5" fill="#f0f0f0" textLength="17.5" lengthAdjust="spacingAndGlyphs" >50s</text>
<path d="M1585,201 l7,-7 v7 Z" fill="#8a8a8a" />
<text x="1596" y="202" font-size="12" fill="#f0f0f0" textLength="64.7" lengthAdjust="spacingAndGlyphs" >Événements</text>
<rect x="1615.5" y="207.5" width="232" height="22" fill="none" stroke="#3d3d3d" stroke-width="1" />
<line x1="1659.5" y1="208" x2="1659.5" y2="229" stroke="#3d3d3d" stroke-width="1" />
<line x1="1785.5" y1="208" x2="1785.5" y2="229" stroke="#3d3d3d" stroke-width="1" />
<rect x="1597.5" y="215.5" width="10" height="10" fill="none" stroke="#e0e0e0" stroke-width="1.2" />
<line x1="1602.5" y1="215.5" x2="1602.5" y2="225.5" stroke="#e0e0e0" stroke-width="1.2" />
<path d="M1585,246 l7,-7 v7 Z" fill="#8a8a8a" />
<text x="1595.9" y="246" font-size="12" fill="#f0f0f0" textLength="149" lengthAdjust="spacingAndGlyphs" >Mémoire du processus (Mo)</text>
<path d="M1752,236.5 h4.5 v12.5 l-2,2 Z" fill="#f2c14e" />
<path d="M1767,235.5 h12 l-6,11 Z" fill="#3b9cf0" />
<text x="1781" y="246" font-size="11" fill="#f0f0f0" >I</text>
<circle cx="1799" cy="242" r="6" fill="#7ab0cc" />
<text x="1807" y="246" font-size="11" fill="#f0f0f0" >(</text>
<rect x="1615.5" y="253.5" width="232" height="68.5" fill="#1f1f1f" stroke="#4a4a4a" stroke-width="1" />
<path d="M1616,322 V262.3 L1626,262.3 L1630,260.8 L1652,260.6 L1655,261.7 L1778,261.5 V322 Z" fill="#587a8e" />
<path d="M1616,262.3 L1626,262.3 L1630,260.8 L1652,260.6 L1655,261.7 L1778,261.5" fill="none" stroke="#6c9ab4" stroke-width="1" />
<line x1="1659.5" y1="254" x2="1659.5" y2="322" stroke="#4f6f82" stroke-width="1" />
<line x1="1785.5" y1="254" x2="1785.5" y2="322" stroke="#3d3d3d" stroke-width="1" />
<text x="1609" y="264.5" font-size="12" fill="#f0f0f0" text-anchor="end" >21</text>
<text x="1609" y="319.5" font-size="12" fill="#f0f0f0" text-anchor="end" >0</text>
<text x="1854" y="264.5" font-size="12" fill="#f0f0f0" >21</text>
<text x="1854" y="319.5" font-size="12" fill="#f0f0f0" >0</text>
<path d="M1585,336 l7,-7 v7 Z" fill="#8a8a8a" />
<text x="1595.9" y="336.5" font-size="12" fill="#f0f0f0" textLength="160" lengthAdjust="spacingAndGlyphs" >UC (% de tous les processeurs)</text>
<rect x="1615.5" y="342.5" width="232" height="68.5" fill="#1f1f1f" stroke="#4a4a4a" stroke-width="1" />
<line x1="1659.5" y1="343" x2="1659.5" y2="411" stroke="#3d3d3d" stroke-width="1" />
<line x1="1785.5" y1="343" x2="1785.5" y2="411" stroke="#3d3d3d" stroke-width="1" />
<path d="M1616,410.5 L1620,408 L1624,407.5 L1628,410 L1632,403 L1637,410.5 L1665,410.5 L1667,407 L1672,410 L1675,408 L1680,410.5 L1712,410.5 L1716,405 L1720,410.5 L1776,410.5 Z" fill="#5d8aa6" stroke="#6c9ab4" stroke-width="0.6" />
<text x="1609" y="354" font-size="12" fill="#f0f0f0" text-anchor="end" >100</text>
<text x="1609" y="408.5" font-size="12" fill="#f0f0f0" text-anchor="end" >0</text>
<text x="1854" y="354" font-size="12" fill="#f0f0f0" >100</text>
<text x="1854" y="408.5" font-size="12" fill="#f0f0f0" >0</text>
<rect x="1579" y="433" width="305" height="3" fill="#3d3d3d" />
<rect x="1583.5" y="440.5" width="53.5" height="18.5" fill="#1f1f1f" stroke="#5a5a5a" stroke-width="1" />
<text x="1588.7" y="453.7" font-size="12" fill="#f0f0f0" textLength="42.5" lengthAdjust="spacingAndGlyphs" >Résumé</text>
<rect x="1637.5" y="441.5" width="75" height="17" fill="none" stroke="#333333" stroke-width="1" />
<text x="1642.5" y="453.7" font-size="12" fill="#a8a8a8" textLength="64.6" lengthAdjust="spacingAndGlyphs" >Événements</text>
<rect x="1713.5" y="441.5" width="144" height="17" fill="none" stroke="#333333" stroke-width="1" />
<text x="1718.9" y="453.7" font-size="12" fill="#a8a8a8" textLength="132.2" lengthAdjust="spacingAndGlyphs" >Utilisation de la mémoire</text>
<rect x="1579" y="458" width="279" height="2" fill="#5a5a5a" />
<path d="M1860,449.5 l7,-4.5 v9 Z" fill="#e0e0e0" />
<path d="M1880,449.5 l-6,-4.5 v9 Z" fill="#e0e0e0" />
<rect x="1579" y="460" width="305" height="1" fill="#333333" />
<rect x="1579" y="482" width="305" height="1" fill="#333333" />
<rect x="1579" y="510" width="305" height="1" fill="#333333" />
<rect x="1579" y="532" width="305" height="1" fill="#333333" />
<rect x="1579" y="560" width="305" height="1" fill="#333333" />
<rect x="1579" y="582" width="305" height="1" fill="#333333" />
<text x="1587.7" y="476" font-size="12" fill="#f0f0f0" textLength="65.2" lengthAdjust="spacingAndGlyphs" >Événements</text>
<path d="M1603,496.5 l3.5,-3.5 l3.5,3.5 l-3.5,3.5 Z" fill="#d0d0d0" stroke="#1f1f1f" stroke-width="0.8" />
<path d="M1599,496.5 l3.5,-3.5 l3.5,3.5 l-3.5,3.5 Z" fill="#b8b8b8" stroke="#1f1f1f" stroke-width="0.8" />
<path d="M1595,496.5 l3.5,-3.5 l3.5,3.5 l-3.5,3.5 Z" fill="#a0a0a0" stroke="#1f1f1f" stroke-width="0.8" />
<text x="1614.5" y="501" font-size="12" fill="#f0f0f0" textLength="171.5" lengthAdjust="spacingAndGlyphs" >Afficher les événements (0 sur 0)</text>
<text x="1587.7" y="526" font-size="12" fill="#f0f0f0" textLength="133" lengthAdjust="spacingAndGlyphs" >Utilisation de la mémoire</text>
<path d="M1594.5,542.5 h3 l1,-1.5 h3 l1,1.5 h3.5 v9 h-11.5 Z" fill="none" stroke="#a0a0a0" stroke-width="1" />
<circle cx="1600.5" cy="547" r="2.2" fill="none" stroke="#a0a0a0" stroke-width="1" />
<text x="1614.5" y="550.5" font-size="12" fill="#f0f0f0" textLength="116.7" lengthAdjust="spacingAndGlyphs" >Prendre un instantané</text>
<text x="1587.7" y="576" font-size="12" fill="#f0f0f0" textLength="94.4" lengthAdjust="spacingAndGlyphs" >Utilisation de l'UC</text>
<circle cx="1600.5" cy="596.5" r="4.5" fill="#3a3a3a" stroke="#a8a8a8" stroke-width="1.3" />
<text x="1614.5" y="601" font-size="12" fill="#f0f0f0" textLength="177" lengthAdjust="spacingAndGlyphs" >Enregistrer le profil du processeur</text>
<g transform="translate(1895,97) rotate(90)">
<text x="0.0" y="0" font-size="12" fill="#c8c8c8" textLength="128" lengthAdjust="spacingAndGlyphs" >Explorateur de solutions</text>
</g>
<g transform="translate(1895,236) rotate(90)">
<text x="0.0" y="0" font-size="12" fill="#c8c8c8" textLength="92" lengthAdjust="spacingAndGlyphs" >Modifications Git</text>
</g>
<rect x="1910" y="97" width="3" height="127" fill="#3d3d3d" />
<rect x="1910" y="236" width="3" height="91" fill="#3d3d3d" />
<rect x="2.5" y="811.5" width="935" height="171.5" fill="#1f1f1f" stroke="#333333" stroke-width="1" />
<text x="6.4" y="826.5" font-size="12" fill="#c8c8c8" textLength="70.4" lengthAdjust="spacingAndGlyphs" >Automatique</text>
<path d="M889.0,820.0 L897.0,820.0 L893,824.0 Z" fill="#d0d0d0" />
<path d="M905.5,817.5 h6 M906.5,817.5 v7 M910.5,817.5 v7 M904.5,824.5 h8 M908.5,824.5 v4" fill="none" stroke="#d0d0d0" stroke-width="1" />
<path d="M922,818 l8,8 M930,818 l-8,8" fill="none" stroke="#d0d0d0" stroke-width="1.4" />
<rect x="3" y="835" width="787" height="21" fill="#383838" />
<text x="7.6" y="850" font-size="12" fill="#d8d8d8" textLength="103.5" lengthAdjust="spacingAndGlyphs" >Rechercher (Ctrl+E)</text>
<rect x="3" y="856" width="920" height="22" fill="#1f1f1f" />
<line x1="11.5" y1="858" x2="11.5" y2="877" stroke="#333333" stroke-width="1" />
<text x="16.6" y="873" font-size="12" fill="#8a8a8a" textLength="27.5" lengthAdjust="spacingAndGlyphs" >Nom</text>
<text x="793.5" y="872.6" font-size="12" fill="#8a8a8a" >e</text>
<line x1="3" y1="878.5" x2="923" y2="878.5" stroke="#333333" stroke-width="1" />
<rect x="923" y="859" width="14" height="124" fill="#2b2b2b" />
<path d="M926,870 l4,-4 l4,4 Z" fill="#999" />
<rect x="926" y="873" width="8" height="94" fill="#3a3a3a" />
<path d="M926,973 l4,4 l4,-4 Z" fill="#999" />
<rect x="2.5" y="982.5" width="81" height="20" fill="#1f1f1f" stroke="#333333" stroke-width="1" />
<text x="7.3" y="996" font-size="12" fill="#f0f0f0" textLength="70.6" lengthAdjust="spacingAndGlyphs" >Automatique</text>
<text x="89.3" y="996" font-size="12" fill="#c8c8c8" textLength="86" lengthAdjust="spacingAndGlyphs" >Variables locales</text>
<rect x="944.5" y="811.5" width="940" height="171.5" fill="#1f1f1f" stroke="#333333" stroke-width="1" />
<rect x="944" y="812" width="941" height="2" fill="#7160e8" />
<text x="949" y="827" font-size="12" fill="#f0f0f0" textLength="29.8" lengthAdjust="spacingAndGlyphs" >Sortie</text>
<defs><pattern id="dots" x="0" y="821" width="4" height="6" patternUnits="userSpaceOnUse"><rect x="0" y="0" width="1" height="1" fill="#6a6a6a"/><rect x="2" y="3" width="1" height="1" fill="#6a6a6a"/></pattern></defs>
<rect x="987" y="821" width="845" height="4" fill="url(#dots)" />
<path d="M1836.0,820.0 L1844.0,820.0 L1840,824.0 Z" fill="#d0d0d0" />
<path d="M1853.5,817.5 h6 M1854.5,817.5 v7 M1858.5,817.5 v7 M1852.5,824.5 h8 M1856.5,824.5 v4" fill="none" stroke="#d0d0d0" stroke-width="1" />
<path d="M1870,818 l8,8 M1878,818 l-8,8" fill="none" stroke="#d0d0d0" stroke-width="1.4" />
<text x="951.4" y="851" font-size="12" fill="#e0e0e0" textLength="148.8" lengthAdjust="spacingAndGlyphs" >Afficher la sortie à partir de :</text>
<rect x="1105.5" y="836.5" width="300" height="19.5" fill="#333333" />
<text x="1109.5" y="851" font-size="12" fill="#f0f0f0" textLength="52.8" lengthAdjust="spacingAndGlyphs" >Déboguer</text>
<path d="M1394.5,844.25 L1401.5,844.25 L1398,847.75 Z" fill="#d0d0d0" />
<line x1="1412.5" y1="837" x2="1412.5" y2="855" stroke="#3d3d3d" stroke-width="1" />
<line x1="1442.5" y1="837" x2="1442.5" y2="855" stroke="#3d3d3d" stroke-width="1" />
<line x1="1494.5" y1="837" x2="1494.5" y2="855" stroke="#3d3d3d" stroke-width="1" />
<line x1="1524.5" y1="837" x2="1524.5" y2="855" stroke="#3d3d3d" stroke-width="1" />
<line x1="1554.5" y1="837" x2="1554.5" y2="855" stroke="#3d3d3d" stroke-width="1" />
<path d="M1424,852.5 h10 M1422,850.5 h5 M1427,840 a2.5,2.5 0 0 0 -2.5,2.5 v5 M1422.5,846 l2,2 l2,-2" fill="none" stroke="#555" stroke-width="1" />
<rect x="1421" y="849" width="10" height="2" fill="#555" />
<path d="M1450,842.5 h6 M1452,840.5 l-2,2 l2,2 M1452,848.5 h10 M1452,851.5 h10" fill="none" stroke="#555" stroke-width="1.2" />
<path d="M1472,842.5 h6 M1476,840.5 l2,2 l-2,2 M1472,848.5 h10 M1472,851.5 h10" fill="none" stroke="#555" stroke-width="1.2" />
<path d="M1503,839.5 l4,4 M1507,839.5 l-4,4" fill="none" stroke="#e0303a" stroke-width="1.2" />
<path d="M1509,839.5 h8 M1509,842.5 h8 M1509,845.5 h8 M1503,848.5 h14 M1503,851.5 h14" fill="none" stroke="#e0e0e0" stroke-width="1" />
<text x="1533" y="843.5" font-size="8" fill="#e0e0e0" font-weight="bold" >ab</text>
<text x="1533" y="850.5" font-size="8" fill="#e0e0e0" font-weight="bold" >c</text>
<path d="M1543,843.5 h3.5 v5 h-7 M1541,846.5 l-2,2 l2,2" fill="none" stroke="#3b9cf0" stroke-width="1.2" />
<circle cx="1570" cy="845.5" r="6.5" fill="none" stroke="#e0e0e0" stroke-width="1.2" />
<path d="M1570,841.5 v4 h3" fill="none" stroke="#e0e0e0" stroke-width="1.2" />
<rect x="945" y="857" width="921" height="109.5" fill="#1e1e1e" />
<g font-family="Liberation Mono" font-size="12.2">
<text x="950.6" y="873" fill="#dedede" textLength="915.7" lengthAdjust="spacingAndGlyphs"> 'metaquant.exe' (CLR v4.0.30319: metaquant.exe) : Chargé 'C:\WINDOWS\Microsoft.Net\assembly\GAC_MSIL\System.Core\v4.0_4.0.0.0__b77</text>
<text x="950.6" y="888" fill="#dedede" textLength="915.7" lengthAdjust="spacingAndGlyphs"> 'metaquant.exe' (CLR v4.0.30319: metaquant.exe) : Chargé 'C:\WINDOWS\Microsoft.Net\assembly\GAC_MSIL\System.Windows.Forms\v4.0_4.0</text>
<text x="950.6" y="903" fill="#dedede" textLength="915.7" lengthAdjust="spacingAndGlyphs"> 'metaquant.exe' (CLR v4.0.30319: metaquant.exe) : Chargé 'C:\WINDOWS\Microsoft.Net\assembly\GAC_MSIL\System.Drawing\v4.0_4.0.0.0__</text>
<text x="950.6" y="918" fill="#dedede" textLength="915.7" lengthAdjust="spacingAndGlyphs"> 'metaquant.exe' (CLR v4.0.30319: metaquant.exe) : Chargé 'C:\WINDOWS\Microsoft.Net\assembly\GAC_MSIL\System.Configuration\v4.0_4.0</text>
<text x="950.6" y="933" fill="#dedede" textLength="915.7" lengthAdjust="spacingAndGlyphs"> 'metaquant.exe' (CLR v4.0.30319: metaquant.exe) : Chargé 'C:\WINDOWS\Microsoft.Net\assembly\GAC_MSIL\System.Xml\v4.0_4.0.0.0__b77a</text>
<text x="950.6" y="948" fill="#dedede" textLength="915.7" lengthAdjust="spacingAndGlyphs"> 'metaquant.exe' (CLR v4.0.30319: metaquant.exe) : Chargé 'C:\WINDOWS\Microsoft.Net\assembly\GAC_MSIL\System.Runtime.Remoting\v4.0_</text>
</g>
<rect x="945" y="857" width="926" height="2" fill="#1f1f1f" />
<rect x="1866" y="858.5" width="19" height="108" fill="#2b2b2b" />
<path d="M1871.5,871 l4,-4 l4,4 Z" fill="#999" />
<rect x="1870" y="890" width="11" height="28" fill="#4d4d4d" />
<rect x="1866" y="918" width="19" height="1.6" fill="#e8e8e8" />
<path d="M1871.5,955 l4,4 l4,-4 Z" fill="#999" />
<rect x="945" y="966.5" width="940" height="16.5" fill="#2b2b2b" />
<path d="M955,974.5 l5,-4.5 v9 Z" fill="#999" />
<rect x="962" y="970.5" width="350" height="8" fill="#3e3e3e" />
<path d="M1861,974.5 l-5,-4.5 v9 Z" fill="#999" />
<text x="949.8" y="995.5" font-size="12" fill="#c8c8c8" textLength="77" lengthAdjust="spacingAndGlyphs" >Pile des appels</text>
<text x="1038.7" y="995.5" font-size="12" fill="#c8c8c8" textLength="70.8" lengthAdjust="spacingAndGlyphs" >Points d'arrêt</text>
<text x="1120.7" y="995.5" font-size="12" fill="#c8c8c8" textLength="124.1" lengthAdjust="spacingAndGlyphs" >Paramètres d'exception</text>
<text x="1256.8" y="995.5" font-size="12" fill="#c8c8c8" textLength="105.2" lengthAdjust="spacingAndGlyphs" >Fenêtre Commande</text>
<text x="1374.0" y="995.5" font-size="12" fill="#c8c8c8" textLength="94" lengthAdjust="spacingAndGlyphs" >Fenêtre Exécution</text>
<rect x="1474.5" y="982.5" width="41" height="20" fill="#1f1f1f" stroke="#333333" stroke-width="1" />
<text x="1479.6" y="996" font-size="12" fill="#f0f0f0" textLength="30.1" lengthAdjust="spacingAndGlyphs" >Sortie</text>
<text x="1521.6" y="996" font-size="12" fill="#c8c8c8" textLength="73.4" lengthAdjust="spacingAndGlyphs" >Liste d'erreurs</text>
<rect x="0" y="1009" width="1916" height="22" fill="#891b2e" />
<rect x="0" y="1031" width="1916" height="1" fill="#7a1020" />
<rect x="0" y="1032" width="1916" height="1" fill="#e6d8ea" />
<path d="M2.5,1013.5 h14 v11 h-7 l-3,3 l-1,-3 h-3 Z" fill="none" stroke="#f0f0f0" stroke-width="1.1" />
<text x="24.0" y="1025" font-size="12" fill="#f0f0f0" textLength="21.3" lengthAdjust="spacingAndGlyphs" >Prêt</text>
<path d="M1452.5,1027 v-13 M1448,1018.5 l4.5,-4.5 l4.5,4.5" fill="none" stroke="#f0f0f0" stroke-width="1.2" />
<text x="1466.2" y="1025" font-size="12" fill="#f0f0f0" textLength="185.6" lengthAdjust="spacingAndGlyphs" >Ajouter au contrôle de code source</text>
<path d="M1658,1024 l4.5,-4.5 l4.5,4.5 Z" fill="#f0f0f0" />
<rect x="1689.5" y="1014.5" width="14" height="13" fill="none" stroke="#f0f0f0" stroke-width="1.1" />
<path d="M1689.5,1018.5 h14 M1694.5,1018.5 v6 h4 v-6" fill="none" stroke="#f0f0f0" stroke-width="1.1" />
<text x="1709.5" y="1025" font-size="12" fill="#f0f0f0" textLength="133" lengthAdjust="spacingAndGlyphs" >Sélectionner le référentiel</text>
<path d="M1848,1024 l4.5,-4.5 l4.5,4.5 Z" fill="#f0f0f0" />
<path d="M1879,1025 v-6 a5,5 0 0 1 10,0 v6 Z M1877,1025 h14" fill="none" stroke="#f0f0f0" stroke-width="1.1" />
<circle cx="1891.5" cy="1026.5" r="5.5" fill="#f08c8c" />
<text x="1891.5" y="1030.3" font-size="10" fill="#1a1a1a" text-anchor="middle" >1</text>
<defs><clipPath id="dlgclip"><rect x="165" y="711" width="629" height="317.5" rx="8"/></clipPath></defs>
<g clip-path="url(#dlgclip)">
<rect x="165" y="711" width="629" height="318" fill="#ffffff" />
<rect x="166" y="741" width="628" height="287" fill="#f0f0f0" />
<rect x="174.5" y="718.5" width="13" height="13" fill="#ffffff" stroke="#b8b8b8" stroke-width="1" />
<rect x="180" y="719" width="7" height="7" fill="#f5c400" stroke="#c89000" stroke-width="0.8" />
<rect x="175" y="723" width="4.5" height="5.5" fill="#d02010" stroke="#901000" stroke-width="0.6" />
<rect x="180" y="727" width="5.5" height="4" fill="#4a8ef0" stroke="#2050b0" stroke-width="0.6" />
<text x="194.2" y="730" font-size="12" fill="#9a9a9a" textLength="59.6" lengthAdjust="spacingAndGlyphs" >MetaQuant</text>
<line x1="675.5" y1="725.5" x2="685" y2="725.5" stroke="#a0a0a0" stroke-width="1" />
<rect x="720.5" y="720.5" width="10" height="10" fill="none" stroke="#a0a0a0" stroke-width="1" />
<path d="M766,720.5 l10.5,10.5 M776.5,720.5 l-10.5,10.5" fill="none" stroke="#a0a0a0" stroke-width="1" />
<text x="218.1" y="764.8" font-size="12" fill="#000000" textLength="50.5" lengthAdjust="spacingAndGlyphs" >UserName</text>
<text x="218.1" y="790.7" font-size="12" fill="#000000" textLength="46.5" lengthAdjust="spacingAndGlyphs" >Password</text>
<text x="218.1" y="816.9" font-size="12" fill="#000000" textLength="56.5" lengthAdjust="spacingAndGlyphs" >HardwareID</text>
<text x="218.1" y="842.8" font-size="12" fill="#000000" textLength="54" lengthAdjust="spacingAndGlyphs" >ClientName</text>
<rect x="285" y="752" width="166" height="18.5" fill="#ffffff" />
<rect x="285" y="769" width="166" height="1.5" fill="#8a8a8a" />
<rect x="285" y="768.5" width="166" height="0.5" fill="#c8c8c8" />
<text x="287.7" y="764.8" font-size="12" fill="#000000" textLength="29.5" lengthAdjust="spacingAndGlyphs" >kanter</text>
<rect x="285" y="778" width="166" height="18.5" fill="#ffffff" />
<rect x="285" y="795" width="166" height="1.5" fill="#8a8a8a" />
<rect x="285" y="794.5" width="166" height="0.5" fill="#c8c8c8" />
<text x="287.5" y="789" font-size="11" fill="#000000" textLength="23" lengthAdjust="spacingAndGlyphs" >******</text>
<rect x="285" y="804" width="166" height="18.5" fill="#ffffff" />
<rect x="285" y="821" width="166" height="1.5" fill="#8a8a8a" />
<rect x="285" y="820.5" width="166" height="0.5" fill="#c8c8c8" />
<text x="287.7" y="816.8" font-size="12" fill="#000000" textLength="49.5" lengthAdjust="spacingAndGlyphs" >metaquant</text>
<rect x="285" y="830" width="166" height="18.5" fill="#ffffff" />
<rect x="285" y="847" width="166" height="1.5" fill="#8a8a8a" />
<rect x="285" y="846.5" width="166" height="0.5" fill="#c8c8c8" />
<text x="287.7" y="842.8" font-size="12" fill="#000000" textLength="29.5" lengthAdjust="spacingAndGlyphs" >kanter</text>
<text x="215.1" y="928.4" font-size="12" fill="#000000" textLength="49.5" lengthAdjust="spacingAndGlyphs" >Instrument</text>
<rect x="284.5" y="917.5" width="167" height="20" fill="#ffffff" stroke="#7a7a7a" stroke-width="1" />
<text x="286.5" y="930.6" font-size="12" fill="#000000" textLength="68" lengthAdjust="spacingAndGlyphs" >YMH23-CBOT</text>
<path d="M438.5,925.5 l3.5,3.5 l3.5,-3.5" fill="none" stroke="#303030" stroke-width="1" />
<rect x="177.5" y="948.5" width="88.5" height="26.5" fill="#fdfdfd" stroke="#d0d0d0" stroke-width="1" rx="4" />
<text x="197.6" y="966" font-size="12" fill="#000000" textLength="48.8" lengthAdjust="spacingAndGlyphs" >Connecter</text>
<rect x="285.5" y="949" width="165" height="26" fill="#fdfdfd" stroke="#0067c0" stroke-width="2" rx="4" />
<text x="298.6" y="966" font-size="12" fill="#000000" textLength="137" lengthAdjust="spacingAndGlyphs" >MARKET_DATA_REQUEST</text>
<rect x="177.5" y="984.5" width="87" height="30.5" fill="#fdfdfd" stroke="#d0d0d0" stroke-width="1" rx="4" />
<text x="189.5" y="1004" font-size="12" fill="#000000" textLength="62" lengthAdjust="spacingAndGlyphs" >Deconnecter</text>
<rect x="285.5" y="984.5" width="165" height="30.5" fill="#fdfdfd" stroke="#d0d0d0" stroke-width="1" rx="4" />
<text x="294.4" y="1004" font-size="12" fill="#000000" textLength="145.2" lengthAdjust="spacingAndGlyphs" >MARKET_DEPTH_REQUEST</text>
<rect x="482" y="754.5" width="320" height="261" fill="#ffffff" />
<rect x="482" y="754.5" width="320" height="2" fill="#a0a0a0" />
<rect x="482" y="754.5" width="2" height="261" fill="#a0a0a0" />
<rect x="484" y="756.5" width="318" height="1" fill="#696969" />
<rect x="484" y="756.5" width="1" height="259" fill="#696969" />
<rect x="482" y="1014.5" width="320" height="1" fill="#e3e3e3" />
<g font-family="Liberation Mono" font-size="13.8">
<text x="485" y="770.6" fill="#008000" textLength="279.0" lengthAdjust="spacingAndGlyphs">HistoricalPriceDataSupported= 0</text>
<text x="485" y="787.6" fill="#008000" textLength="198.0" lengthAdjust="spacingAndGlyphs">MarketDataSupported= 1</text>
<text x="485" y="804.6" fill="#008000" textLength="225.0" lengthAdjust="spacingAndGlyphs">MarketDepthIsSupported= 1</text>
<text x="485" y="821.6" fill="#008000" textLength="306.0" lengthAdjust="spacingAndGlyphs">MarketDepthUpdatesBestBidAndAsk= 0</text>
<text x="485" y="838.6" fill="#008000" textLength="189.0" lengthAdjust="spacingAndGlyphs">OCOOrdersSupported= 1</text>
<text x="485" y="855.6" fill="#008000" textLength="405.0" lengthAdjust="spacingAndGlyphs">OneHistoricalPriceDataRequestPerConnection= 1</text>
<text x="485" y="872.6" fill="#008000" textLength="270.0" lengthAdjust="spacingAndGlyphs">OrderCancelReplaceSupported= 1</text>
<text x="485" y="889.6" fill="#008000" textLength="369.0" lengthAdjust="spacingAndGlyphs">ResubscribeWhenMarketDataFeedAvailable= 1</text>
<text x="485" y="906.6" fill="#008000" textLength="279.0" lengthAdjust="spacingAndGlyphs">SecurityDefinitionsSupported= 1</text>
<text x="485" y="923.6" fill="#008000" textLength="189.0" lengthAdjust="spacingAndGlyphs">TradingIsSupported= 1</text>
<text x="485" y="940.6" fill="#008000" textLength="279.0" lengthAdjust="spacingAndGlyphs">UseIntegerPriceOrderMessages= 0</text>
<text x="485" y="957.6" fill="#008000" textLength="432.0" lengthAdjust="spacingAndGlyphs">UsesMultiplePositionsPerSymbolAndTradeAccount= 0</text>
<text x="485" y="974.6" fill="#ff0000" textLength="198.0" lengthAdjust="spacingAndGlyphs">-&gt; MARKET_DATA_REQUEST</text>
<text x="485" y="991.6" fill="#000000" textLength="252.0" lengthAdjust="spacingAndGlyphs">&lt;- M= 103 MARKET_DATA_REJECT</text>
<text x="485" y="1008.6" fill="#008000" textLength="279.0" lengthAdjust="spacingAndGlyphs">Market data request not allowed</text>
</g>
</g></svg></body></html>
